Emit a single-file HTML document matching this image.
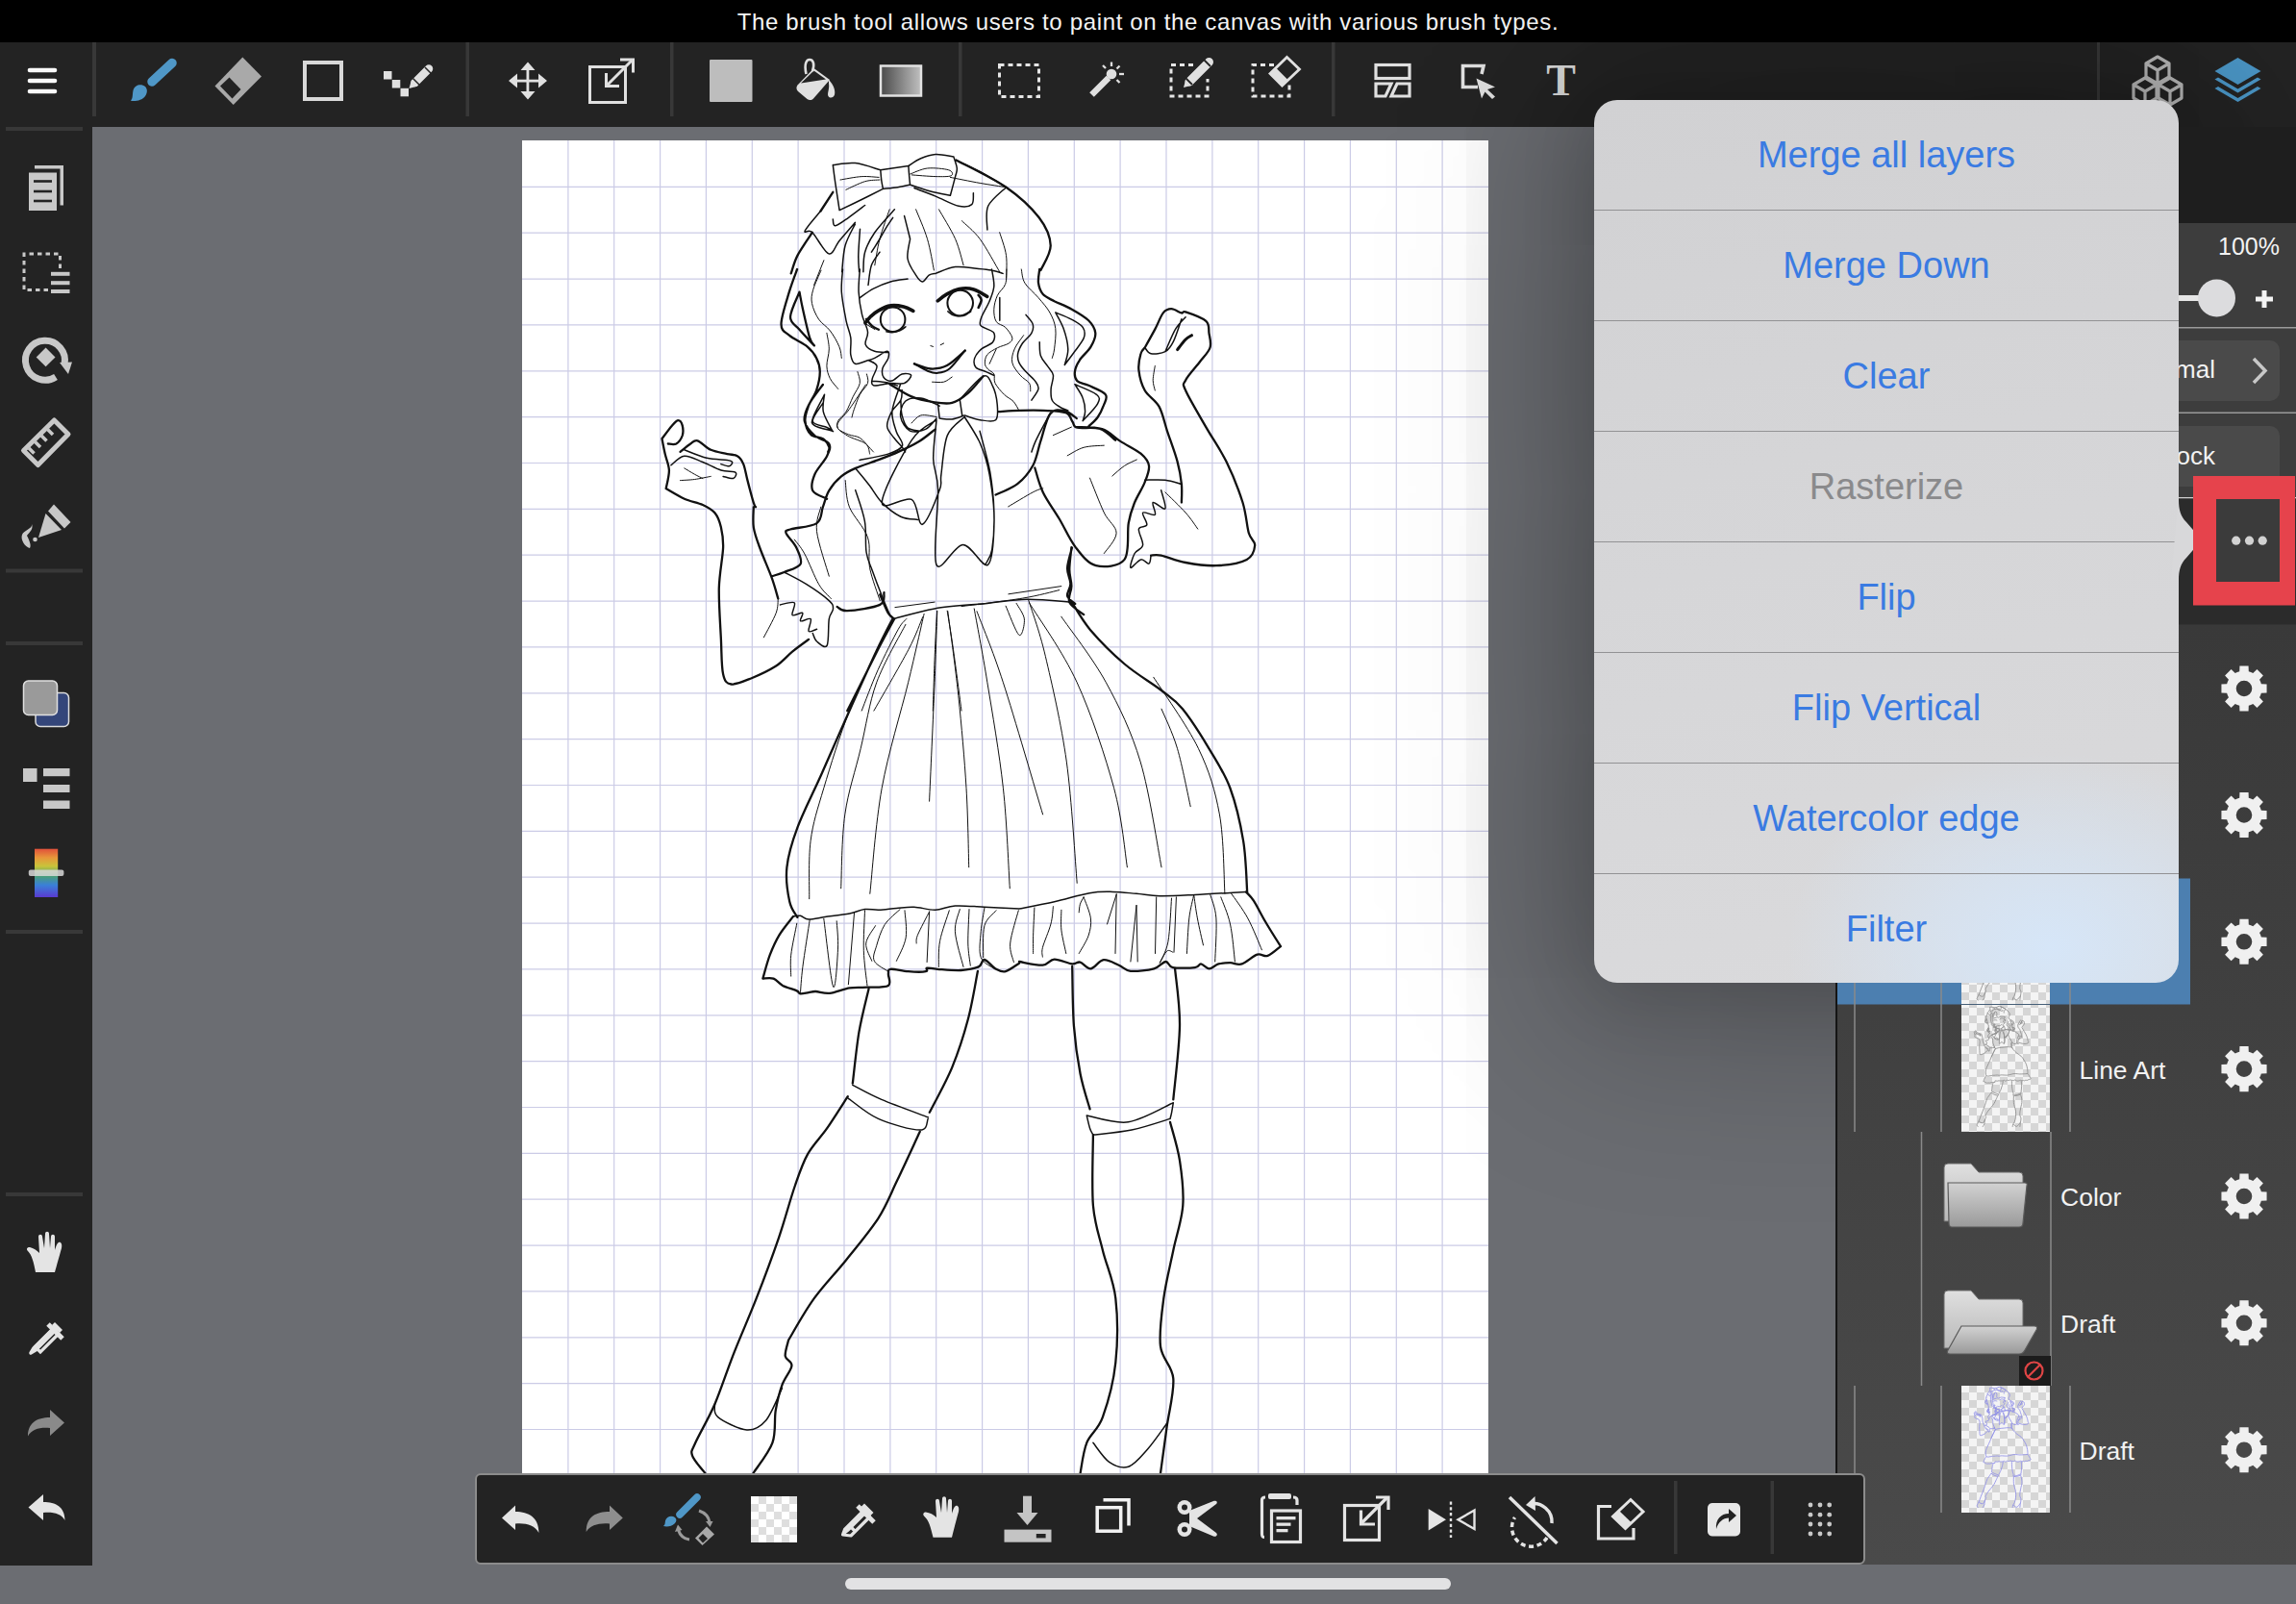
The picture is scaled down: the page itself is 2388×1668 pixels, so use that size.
<!DOCTYPE html>
<html><head><meta charset="utf-8">
<style>
*{margin:0;padding:0;box-sizing:border-box}
html,body{width:2388px;height:1668px;overflow:hidden;background:#6b6d72;font-family:"Liberation Sans",sans-serif}
.a{position:absolute}
#topbar{left:0;top:0;width:2388px;height:44px;background:#000;color:#f4f4f4;font-size:24px;letter-spacing:0.66px;line-height:46px;text-align:center;padding-left:0px}
#toolbar{left:0;top:44px;width:2388px;height:88px;background:#232323}
#sidebar{z-index:0;left:0;top:132px;width:96px;height:1496px;background:#232323}
#canvas{left:543px;top:146px;width:1005px;height:1386px;background:#fff;overflow:hidden}
#btool{left:494px;top:1532px;width:1446px;height:95px;background:#232323;border:2px solid #8c8c8c;border-radius:6px}
#home{left:879px;top:1641px;width:630px;height:12px;border-radius:6px;background:#e2e2e4}
#panel{left:1909px;top:132px;width:479px;height:1495px;background:#1e1e1e;overflow:hidden}
#popup{left:1658px;top:104px;width:608px;height:918px;border-radius:24px;background:radial-gradient(ellipse 45% 22% at 78% 96%,rgba(214,230,248,1) 0%,rgba(214,230,248,0.6) 45%,rgba(214,230,248,0) 100%),linear-gradient(170deg,#d1d1d3 0%,#d6d6d8 50%,#dadadc 100%);overflow:hidden}
#shadow{left:1658px;top:104px;width:608px;height:918px;border-radius:24px;box-shadow:0 10px 200px 30px rgba(0,0,0,0.30),0 4px 70px 10px rgba(0,0,0,0.12)}
.row{position:absolute;left:0;width:608px;height:115px;color:#3a7be2;font-size:38px;text-align:center;line-height:115px}
.rsep{position:absolute;left:0;width:608px;height:1.2px;background:#929294}
.lname{position:absolute;color:#f2f2f2;font-size:26.5px}
</style></head><body>
<div id="topbar" class="a">The brush tool allows users to paint on the canvas with various brush types.</div>
<div id="toolbar" class="a"></div>
<div id="sidebar" class="a"></div>
<svg class="a" style="left:0;top:44px" width="2388" height="1584" viewBox="0 44 2388 1584">
<defs>
<linearGradient id="grd" x1="0" y1="0" x2="1" y2="0"><stop offset="0" stop-color="#4a4a4a"/><stop offset="1" stop-color="#c0c0c0"/></linearGradient>
<linearGradient id="rb" x1="0" y1="0" x2="0" y2="1"><stop offset="0" stop-color="#e0503a"/><stop offset="0.18" stop-color="#e8963a"/><stop offset="0.36" stop-color="#c8c43a"/><stop offset="0.55" stop-color="#4aa070"/><stop offset="0.75" stop-color="#3a80d8"/><stop offset="1" stop-color="#5a3ad0"/></linearGradient>
</defs>
<!-- separators -->
<g fill="#383838">
<rect x="96" y="44" width="4" height="77"/>
<rect x="484.5" y="44" width="3.5" height="77"/>
<rect x="697" y="44" width="3.5" height="77"/>
<rect x="997" y="44" width="3.5" height="77"/>
<rect x="1385" y="44" width="3.5" height="77"/>
<rect x="2181" y="44" width="3" height="88"/>
<rect x="6" y="132" width="80" height="4"/>
<rect x="6" y="591.5" width="80" height="4"/>
<rect x="6" y="667" width="80" height="4"/>
<rect x="6" y="967" width="80" height="4"/>
<rect x="6" y="1240" width="80" height="4"/>
</g>
<!-- hamburger -->
<g stroke="#fafafa" stroke-width="4.6" stroke-linecap="round">
<line x1="31" y1="73" x2="57" y2="73"/><line x1="31" y1="84" x2="57" y2="84"/><line x1="31" y1="95" x2="57" y2="95"/>
</g>
<!-- brush blue -->
<g fill="#4f97c7">
<line x1="179" y1="65.5" x2="158" y2="85" stroke="#4f97c7" stroke-width="9.5" stroke-linecap="round"/>
<path d="M151,90 C147,86.5 140,88 138.5,94 C137.5,99 138.5,101.5 136,104.8 C141,105.5 148,104.5 151,100 C153.5,96.5 153.5,92.5 151,90Z"/>
</g>
<!-- eraser -->
<path d="M252.3,59.5 L272,79.5 L242.7,109 L223.5,89.5Z" fill="#a9a9a9"/>
<path d="M229,89.5 L238.5,80.5 L250.5,93 L241.5,102.5Z" fill="#232323"/>
<!-- square -->
<rect x="317" y="65" width="38" height="38" fill="none" stroke="#d8d8d8" stroke-width="4"/>
<!-- dot pencil -->
<g fill="#e0e0e0">
<rect x="399" y="74" width="8.5" height="8.5"/><rect x="407.8" y="83" width="8.5" height="8.5"/><rect x="416.5" y="91.8" width="8.5" height="8.5"/>
<path d="M425.5,92 L428,83 L434.5,89.5Z"/>
<line x1="431.5" y1="86" x2="446" y2="71.5" stroke="#e0e0e0" stroke-width="8.5" stroke-linecap="round"/>
</g>
<line x1="442" y1="70" x2="448.5" y2="76.5" stroke="#232323" stroke-width="1.5"/>
<line x1="429.5" y1="81.5" x2="436" y2="88" stroke="#232323" stroke-width="1.5"/>
<!-- move -->
<g fill="#e0e0e0">
<rect x="533" y="82.7" width="32" height="2.8"/><rect x="547.5" y="68" width="2.8" height="32"/>
<path d="M549,64.4 L541.5,73 L556.5,73Z M549,103.6 L541.5,95 L556.5,95Z M529,84 L538,76.5 L538,91.5Z M569,84 L560,76.5 L560,91.5Z"/>
</g>
<!-- transform -->
<g fill="none" stroke="#e0e0e0" stroke-width="3">
<rect x="613.5" y="69.5" width="37" height="37"/>
<line x1="632" y1="88" x2="657.5" y2="62.5"/>
<path d="M645,62 H658.5 V75.5"/>
<path d="M630.5,76 V89.5 H644"/>
</g>
<!-- fill square -->
<rect x="738" y="62" width="44.5" height="44" rx="1" fill="#bdbdbd"/>
<!-- bucket -->
<g fill="#e0e0e0">
<path d="M846.5,71 L863,83 L846,102.5 C844,104.5 841.5,104.5 839.5,103 L830,95 C828,93 828,90.5 829.5,88.5Z"/>
<path d="M833,86.5 L846.5,73.5 L859,82.5 Z" fill="#232323"/>
<path d="M838.5,77 C836,66 839,62 842,62 C846,62 847.5,67 845,74" fill="none" stroke="#e0e0e0" stroke-width="2.6"/>
<path d="M862,83 C867,88 869,94 868,98.5 C867,102 863,102.5 861.5,100 C860,97.5 863,92 862,87Z"/>
</g>
<!-- gradient -->
<rect x="916" y="68.5" width="42" height="31" fill="url(#grd)" stroke="#e2e2e2" stroke-width="2.5"/>
<!-- select rect -->
<rect x="1039.5" y="67.5" width="41" height="33" fill="none" stroke="#e6e6e6" stroke-width="3" stroke-dasharray="5 4"/>
<!-- wand -->
<g fill="#e0e0e0" stroke="#e0e0e0">
<line x1="1135.5" y1="98.5" x2="1153" y2="81" stroke-width="6.5"/>
<circle cx="1156" cy="77" r="5.3" stroke="none"/>
<g stroke-width="2.3"><line x1="1156" y1="64.5" x2="1156" y2="69"/><line x1="1147" y1="68" x2="1150" y2="71"/><line x1="1164.5" y1="68.5" x2="1161.5" y2="71.5"/><line x1="1164" y1="77" x2="1169" y2="77"/><line x1="1161.5" y1="83" x2="1164.5" y2="86"/></g>
</g>
<!-- select pen -->
<g>
<path d="M1241,67.5 H1218 V100 H1256 V82" fill="none" stroke="#e6e6e6" stroke-width="3" stroke-dasharray="5 4"/>
<path d="M1231,91 L1233.5,81.5 L1240.5,88.5Z" fill="#e0e0e0"/>
<line x1="1237" y1="85" x2="1257.5" y2="64.5" stroke="#e0e0e0" stroke-width="9" stroke-linecap="round"/>
<line x1="1252" y1="62" x2="1259" y2="69" stroke="#232323" stroke-width="1.8"/>
<line x1="1233" y1="81" x2="1240" y2="88" stroke="#232323" stroke-width="1.8"/>
</g>
<!-- select eraser -->
<g>
<path d="M1325,67.5 H1303 V100 H1341 V88" fill="none" stroke="#e6e6e6" stroke-width="3" stroke-dasharray="5 4"/>
<path d="M1338.5,59.5 L1351.5,72 L1333.5,89 L1321,76.5Z" fill="none" stroke="#e0e0e0" stroke-width="2.8"/>
<path d="M1327,70.5 L1339.5,83 L1333.5,89 L1321,76.5Z" fill="#e0e0e0"/>
</g>
<!-- panels -->
<g fill="none" stroke="#e0e0e0" stroke-width="3.2">
<rect x="1431" y="67.5" width="35" height="14"/>
<path d="M1431,87 H1447 L1441,100 H1431Z"/>
<path d="M1453,87 H1466 V100 H1447Z"/>
</g>
<!-- select arrow -->
<g>
<path d="M1537,90.5 H1521.5 V68.5 H1543 L1541,77" fill="none" stroke="#e0e0e0" stroke-width="3.6"/>
<path d="M1535.5,81.5 L1555,90.5 L1547,93 L1555,100.5 L1552,103 L1544.5,95.5 L1541,102.5Z" fill="#e0e0e0"/>
</g>
<!-- T -->
<text x="1623.5" y="98.5" fill="#d8d8d8" font-size="46" font-weight="bold" text-anchor="middle" font-family="Liberation Serif">T</text>
<!-- cubes -->
<g fill="none" stroke="#b8b8b8" stroke-width="3.2" stroke-linejoin="round">
<path d="M2244,59 L2256,66 L2256,80 L2244,87 L2232,80 L2232,66Z M2232,66 L2244,73 L2256,66 M2244,73 V87"/>
<path d="M2231,81 L2243,88 L2243,102 L2231,109 L2219,102 L2219,88Z M2219,88 L2231,95 L2243,88 M2231,95 V109"/>
<path d="M2257,81 L2269,88 L2269,102 L2257,109 L2245,102 L2245,88Z M2245,88 L2257,95 L2269,88 M2257,95 V109"/>
</g>
<!-- layers blue -->
<g fill="#4a95c5">
<path d="M2327.5,60 L2351.5,74 L2327.5,88 L2303.5,74Z"/>
<path d="M2303.5,82.5 L2307,80.5 L2327.5,92.5 L2348,80.5 L2351.5,82.5 L2327.5,96.5Z"/>
<path d="M2303.5,92 L2307,90 L2327.5,102 L2348,90 L2351.5,92 L2327.5,106Z"/>
</g>
<!-- SIDEBAR -->
<g fill="#c8c8c8">
<path d="M36,172 H66 V213.5 H62.5 V175.5 H36Z"/>
<rect x="30" y="179.5" width="29" height="39.5"/>
</g>
<g stroke="#232323" stroke-width="2.6"><line x1="35" y1="188.5" x2="54" y2="188.5"/><line x1="35" y1="199" x2="54" y2="199"/><line x1="35" y1="209" x2="54" y2="209"/></g>
<path d="M50,301.5 H25 V264 H62.5 V279" fill="none" stroke="#c8c8c8" stroke-width="3" stroke-dasharray="4.5 4"/>
<g fill="#c8c8c8"><rect x="53" y="282.8" width="19.5" height="4"/><rect x="53" y="292.2" width="19.5" height="4"/><rect x="53" y="301" width="19.5" height="4"/></g>
<path d="M58,392 A20.5,20.5 0 1 1 67,379" fill="none" stroke="#c8c8c8" stroke-width="7"/>
<path d="M62,377 L75,376.5 L71,389 Z" fill="#c8c8c8"/>
<path d="M47.6,361.5 L57.5,371.4 L47.6,381.3 L37.7,371.4Z" fill="#c8c8c8"/>
<g>
<path d="M56.4,437 L71,451.5 L39.5,483.5 L24.5,468.5Z" fill="none" stroke="#c8c8c8" stroke-width="5" stroke-linejoin="round"/>
<g stroke="#c8c8c8" stroke-width="3.5"><line x1="30" y1="466" x2="35.5" y2="471.5"/><line x1="36.5" y1="459.5" x2="42" y2="465"/><line x1="43" y1="453" x2="48.5" y2="458.5"/><line x1="49.5" y1="446.5" x2="55" y2="452"/></g>
</g>
<g fill="#c8c8c8">
<path d="M56,524.5 L73.5,543 L67,549.5 L50,531.5Z"/>
<path d="M47.5,534 L64,551 L40,559 Z"/>
<circle cx="36.5" cy="561" r="2.3"/>
<path d="M33,545 C34,550 25,551 23,556 C21,561 26,569 31,570 C33,567 30,561 28,557 C31,553 35,550 33,545Z"/>
</g>
<rect x="37" y="720.5" width="34.5" height="35" rx="5" fill="#34467a" stroke="#dcdcdc" stroke-width="1.5"/>
<rect x="24.5" y="708" width="35" height="35.5" rx="5" fill="#9a9a9a" stroke="#e0e0e0" stroke-width="1.5"/>
<g fill="#c8c8c8"><rect x="24" y="799" width="14.5" height="14"/><rect x="45" y="799" width="27.5" height="8.2"/><rect x="45" y="816" width="27.5" height="8"/><rect x="45" y="832.5" width="27.5" height="8.5"/></g>
<rect x="36" y="882.7" width="24.2" height="50.3" fill="url(#rb)"/>
<rect x="29.8" y="904.6" width="36.6" height="6.5" rx="2" fill="#d8d8d8" opacity="0.85"/>
<!-- hand -->
<g id="hand" fill="#e4e4e4">
<path d="M37,1323 L57,1323 C59,1316 62,1305 64,1298 C65,1293 63,1291 61,1292 C59,1293 58,1297 57,1300 L57,1286 C57,1283 53,1283 53,1286 L52,1298 L51,1283 C51,1280 47,1280 47,1283 L46,1298 L44,1286 C44,1283 40,1283 40,1286 L41,1303 C38,1300 35,1298 31,1297 C28,1297 27,1299 29,1301 C33,1305 35,1312 37,1323Z"/>
</g>
<!-- picker -->
<g>
<path d="M59,1382 L37,1404 L32,1407 L35,1402 L57,1380" fill="none" stroke="#e4e4e4" stroke-width="3.5" stroke-linejoin="round"/>
<path d="M36.5,1400.5 L55,1382 L60.5,1387.5 L42,1406Z" fill="none" stroke="#e4e4e4" stroke-width="3.2"/>
<line x1="50" y1="1377" x2="65" y2="1392" stroke="#e4e4e4" stroke-width="5"/>
<path d="M57,1375 L65,1383 L62,1386 L54,1378Z" fill="#e4e4e4"/>
</g>
<!-- redo -->
<path d="M29,1493.5 C29,1480 38,1474 52,1474 L52,1466 L67,1479.5 L52,1493 L52,1485 C42,1484 33,1486 29,1493.5Z" fill="#8a8a8a"/>
<!-- undo -->
<path d="M67.5,1581 C67.5,1567 58,1562 45,1562 L45,1554 L29.5,1567.5 L45,1581 L45,1573 C55,1572 64,1574 67.5,1581Z" fill="#e4e4e4"/>
</svg>

<div id="canvas" class="a"><svg class="a" style="left:0;top:0" width="1005" height="1386" viewBox="0 0 1005 1386"><g stroke="#cbcbe6" stroke-width="1.2"><line x1="47.9" y1="0" x2="47.9" y2="1386"/><line x1="95.7" y1="0" x2="95.7" y2="1386"/><line x1="143.6" y1="0" x2="143.6" y2="1386"/><line x1="191.4" y1="0" x2="191.4" y2="1386"/><line x1="239.3" y1="0" x2="239.3" y2="1386"/><line x1="287.1" y1="0" x2="287.1" y2="1386"/><line x1="335.0" y1="0" x2="335.0" y2="1386"/><line x1="382.9" y1="0" x2="382.9" y2="1386"/><line x1="430.7" y1="0" x2="430.7" y2="1386"/><line x1="478.6" y1="0" x2="478.6" y2="1386"/><line x1="526.4" y1="0" x2="526.4" y2="1386"/><line x1="574.3" y1="0" x2="574.3" y2="1386"/><line x1="622.1" y1="0" x2="622.1" y2="1386"/><line x1="670.0" y1="0" x2="670.0" y2="1386"/><line x1="717.9" y1="0" x2="717.9" y2="1386"/><line x1="765.7" y1="0" x2="765.7" y2="1386"/><line x1="813.6" y1="0" x2="813.6" y2="1386"/><line x1="861.4" y1="0" x2="861.4" y2="1386"/><line x1="909.3" y1="0" x2="909.3" y2="1386"/><line x1="957.1" y1="0" x2="957.1" y2="1386"/><line x1="0" y1="48.4" x2="1005" y2="48.4"/><line x1="0" y1="96.2" x2="1005" y2="96.2"/><line x1="0" y1="144.1" x2="1005" y2="144.1"/><line x1="0" y1="191.9" x2="1005" y2="191.9"/><line x1="0" y1="239.8" x2="1005" y2="239.8"/><line x1="0" y1="287.6" x2="1005" y2="287.6"/><line x1="0" y1="335.5" x2="1005" y2="335.5"/><line x1="0" y1="383.4" x2="1005" y2="383.4"/><line x1="0" y1="431.2" x2="1005" y2="431.2"/><line x1="0" y1="479.1" x2="1005" y2="479.1"/><line x1="0" y1="526.9" x2="1005" y2="526.9"/><line x1="0" y1="574.8" x2="1005" y2="574.8"/><line x1="0" y1="622.6" x2="1005" y2="622.6"/><line x1="0" y1="670.5" x2="1005" y2="670.5"/><line x1="0" y1="718.4" x2="1005" y2="718.4"/><line x1="0" y1="766.2" x2="1005" y2="766.2"/><line x1="0" y1="814.1" x2="1005" y2="814.1"/><line x1="0" y1="861.9" x2="1005" y2="861.9"/><line x1="0" y1="909.8" x2="1005" y2="909.8"/><line x1="0" y1="957.6" x2="1005" y2="957.6"/><line x1="0" y1="1005.5" x2="1005" y2="1005.5"/><line x1="0" y1="1053.4" x2="1005" y2="1053.4"/><line x1="0" y1="1101.2" x2="1005" y2="1101.2"/><line x1="0" y1="1149.1" x2="1005" y2="1149.1"/><line x1="0" y1="1196.9" x2="1005" y2="1196.9"/><line x1="0" y1="1244.8" x2="1005" y2="1244.8"/><line x1="0" y1="1292.6" x2="1005" y2="1292.6"/><line x1="0" y1="1340.5" x2="1005" y2="1340.5"/></g></svg><svg class="a" style="left:0;top:0" width="1005" height="1386" viewBox="543 146 1005 1386"><g fill="none" stroke="#111" stroke-linecap="round" stroke-linejoin="round"><path stroke-width="1.5" d="M866.3,171.6C870.1,171.3 881.1,168.7 889.3,169.6C897.6,170.4 911.4,175.6 915.8,176.8M866.3,171.6C866.7,174.8 867.7,182.6 868.8,190.4C870.0,198.3 872.4,213.9 873.1,218.6M873.1,218.6C877.0,216.8 888.6,211.2 896.2,207.5C903.7,203.8 914.7,198.3 918.4,196.4M915.8,176.8L944.9,172.5M944.9,172.5C945.0,174.3 945.4,180.3 945.7,183.6C946.0,186.9 946.4,190.7 946.6,192.1M918.4,196.4C921.0,196.1 929.1,195.4 933.8,194.7C938.5,194.0 944.4,192.6 946.6,192.1M915.8,176.8C916.0,178.5 916.3,183.7 916.7,187.0C917.1,190.3 918.1,194.8 918.4,196.4M944.9,172.5C947.0,171.2 953.0,166.8 957.7,164.8C962.4,162.8 967.4,160.8 973.1,160.5C978.8,160.2 988.7,162.7 991.9,163.1M991.9,163.1C992.4,165.1 995.0,171.6 995.3,175.0C995.6,178.5 994.7,178.9 993.6,183.6C992.4,188.3 989.3,200.0 988.4,203.2M946.6,192.1C950.1,193.3 961.0,197.1 967.9,199.0C974.9,200.8 985.0,202.5 988.4,203.2M994.4,166.5C998.6,168.5 1010.5,173.8 1019.2,178.5C1027.9,183.2 1042.0,192.0 1046.5,194.7M1046.5,194.7C1043.4,198.0 1031.0,206.9 1027.7,214.3C1024.5,221.7 1027.0,235.0 1026.9,239.1M1012.4,200.7C1012.1,202.7 1013.2,210.4 1010.7,212.6C1008.1,214.9 1003.2,215.8 997.0,214.3C990.7,212.9 980.8,207.2 973.1,204.1C965.4,201.0 954.6,197.0 950.9,195.5M899.6,213.5C896.8,215.6 887.6,222.7 882.5,226.3C877.4,229.9 871.5,234.6 868.8,234.8C866.1,235.1 866.7,229.1 866.3,228.0M853.5,219.5C850.8,222.9 838.7,236.3 837.2,240.0C835.8,243.7 840.8,237.7 844.9,241.7C849.1,245.7 857.3,262.5 862.0,263.9C866.7,265.3 868.6,255.6 873.1,250.2C877.7,244.8 886.6,234.6 889.3,231.4M889.3,233.1C887.6,236.8 881.4,247.1 879.1,255.3C876.8,263.6 876.2,278.1 875.7,282.7M894.5,238.3C894.2,242.8 892.9,258.2 892.8,265.6C892.6,273.0 893.5,279.8 893.6,282.7M897.9,282.7C898.2,279.3 897.6,269.0 899.6,262.2C901.6,255.3 904.7,249.1 909.8,241.7C915.0,234.3 926.9,221.7 930.4,217.8M906.4,262.2C907.9,259.9 912.4,252.8 915.0,248.5C917.5,244.2 919.5,240.3 921.8,236.6C924.1,232.9 927.5,228.0 928.6,226.3M903.0,296.4C903.6,292.9 904.4,281.5 906.4,275.8C908.4,270.2 913.6,264.5 915.0,262.2M946.6,248.5C946.2,251.9 943.0,262.8 944.0,269.0C945.0,275.3 950.0,282.1 952.6,286.1C955.1,290.1 957.1,292.9 959.4,292.9C961.7,292.9 964.0,287.5 966.2,286.1C968.5,284.7 971.9,284.7 973.1,284.4M940.6,224.6C941.3,227.4 943.9,237.7 944.9,241.7C945.9,245.7 946.3,247.4 946.6,248.5M973.1,284.4C976.5,283.3 986.4,278.4 993.6,277.6C1000.7,276.7 1009.5,278.7 1015.8,279.3C1022.0,279.8 1026.6,280.1 1031.2,281.0C1035.7,281.8 1041.1,283.8 1043.1,284.4M711.8,467.8C715.7,469.2 727.7,474.5 735.1,476.3C742.5,478.1 751.9,477.7 756.3,478.4C760.7,479.1 761.2,479.5 761.6,480.5C761.9,481.6 760.4,484.4 758.4,484.8C756.5,485.1 751.3,483.0 749.9,482.6M698.0,483.7C700.3,482.1 706.3,474.7 711.8,474.2C717.3,473.6 724.5,478.1 730.9,480.5C737.2,483.0 744.3,487.2 749.9,489.0C755.6,490.8 762.6,489.7 764.8,491.1C766.9,492.5 764.8,496.8 762.6,497.5C760.5,498.2 753.8,495.7 752.1,495.4M815.6,595.0C819.5,597.1 831.2,602.7 838.9,607.7C846.7,612.6 857.7,620.4 862.3,624.6C866.8,628.9 866.5,629.9 866.5,633.1C866.5,636.3 863.3,637.4 862.3,643.7C861.2,650.1 862.3,667.4 860.1,671.3C858.0,675.1 852.0,669.1 849.5,667.0C847.1,664.9 846.0,660.0 845.3,658.5M811.4,628.9C813.9,628.5 824.1,625.0 826.2,626.8C828.3,628.5 822.7,637.7 824.1,639.5C825.5,641.2 833.3,636.3 834.7,637.4C836.1,638.4 831.2,644.8 832.6,645.8C834.0,646.9 841.8,641.9 843.2,643.7C844.6,645.5 840.0,654.7 841.1,656.4C842.1,658.2 848.1,654.7 849.5,654.3M855.9,419.1C854.1,422.3 844.6,433.9 845.3,438.1C846.0,442.4 856.6,442.7 860.1,444.5C863.7,446.3 865.4,448.0 866.5,448.7M936.4,400.0C935.0,404.6 928.7,419.4 927.9,427.5C927.2,435.7 930.4,442.7 932.2,448.7C934.0,454.7 940.0,459.7 938.5,463.6C937.1,467.5 931.1,469.6 923.7,472.1C916.3,474.5 899.0,477.4 894.0,478.4M1190.7,361.5C1191.8,362.5 1193.6,367.1 1197.1,367.8C1200.6,368.5 1208.0,367.8 1211.9,365.7C1215.8,363.6 1217.6,360.8 1220.4,355.1C1223.2,349.4 1227.5,335.7 1228.9,331.8M1211.9,365.7C1213.7,361.8 1219.0,348.4 1222.5,342.4C1226.0,336.4 1231.3,331.8 1233.1,329.7M1190.7,499.2C1194.3,499.2 1205.6,498.5 1211.9,499.2C1218.3,499.9 1226.0,502.7 1228.9,503.4M1207.7,509.8C1208.4,513.0 1213.3,526.8 1211.9,528.9C1210.5,531.0 1201.0,521.5 1199.2,522.5C1197.4,523.6 1203.1,533.5 1201.3,535.2C1199.6,537.0 1190.0,531.3 1188.6,533.1C1187.2,534.9 1193.6,543.0 1192.8,545.8C1192.1,548.7 1185.1,546.5 1184.4,550.1C1183.7,553.6 1189.3,562.8 1188.6,567.0C1187.9,571.3 1182.3,571.6 1180.1,575.5C1178.0,579.4 1174.8,589.3 1175.9,590.3C1177.0,591.4 1183.3,582.6 1186.5,581.9C1189.7,581.1 1193.2,586.8 1195.0,586.1C1196.7,585.4 1196.7,579.0 1197.1,577.6M1019.1,448.3C1020.8,455.4 1027.2,476.6 1029.7,490.7C1032.1,504.9 1033.6,519.7 1033.9,533.1C1034.3,546.5 1033.2,562.4 1031.8,571.3C1030.4,580.1 1026.5,583.6 1025.4,586.1M928.2,643.9C935.5,642.1 955.6,635.7 972.1,632.9C988.5,630.2 1010.9,629.0 1026.9,627.4C1042.9,625.8 1053.5,623.6 1068.1,623.3C1082.7,623.1 1107.0,625.6 1114.7,626.1M886.8,1128.4C891.8,1130.9 903.7,1137.9 916.8,1143.4C929.9,1149.0 957.1,1158.7 965.2,1161.8M881.8,1141.8C887.1,1145.4 901.0,1157.9 913.5,1163.4C926.0,1169.0 948.2,1175.1 956.8,1175.1C965.4,1175.1 963.8,1165.4 965.2,1163.4M743.4,1460.3C743.9,1462.5 741.1,1469.2 746.7,1473.6C752.3,1478.1 768.4,1486.4 776.7,1487.0C785.1,1487.5 790.6,1484.2 796.7,1477.0C802.8,1469.7 810.6,1449.2 813.4,1443.6M1130.3,1160.1C1137.5,1161.2 1158.6,1169.0 1173.6,1166.8C1188.6,1164.5 1212.5,1150.1 1220.3,1146.8M1136.9,1180.1C1143.6,1179.3 1163.6,1177.9 1177.0,1175.1C1190.3,1172.3 1210.3,1165.4 1217.0,1163.4M1130.3,1160.1C1130.8,1162.3 1132.5,1170.1 1133.6,1173.4C1134.7,1176.8 1136.4,1179.0 1136.9,1180.1M1220.3,1146.8C1220.0,1148.4 1219.2,1154.0 1218.6,1156.8C1218.1,1159.5 1217.3,1162.3 1217.0,1163.4M1136.9,1500.3C1139.7,1503.6 1147.5,1516.1 1153.6,1520.3C1159.7,1524.5 1166.9,1527.5 1173.6,1525.3C1180.3,1523.1 1187.0,1514.5 1193.6,1507.0C1200.3,1499.5 1210.3,1484.7 1213.6,1480.3M907.5,396.2C910.0,396.5 917.8,397.0 922.1,397.8C926.5,398.6 931.6,400.5 933.5,401.1M977.2,422.1C974.0,420.8 963.7,414.8 957.8,414.0C951.8,413.2 945.1,414.0 941.6,417.3C938.1,420.5 935.9,428.3 936.7,433.5C937.5,438.6 942.1,445.9 946.4,448.1C950.8,450.2 958.1,448.6 962.6,446.4C967.2,444.3 972.1,437.0 974.0,435.1M975.6,420.5L977.2,435.1M998.3,415.7L1000.7,431.9M977.2,435.1C979.4,435.2 985.9,436.4 990.2,435.9C994.5,435.4 1001.0,432.5 1003.2,431.9M998.3,415.7C1002.3,411.6 1016.9,393.8 1022.6,391.3C1028.3,388.9 1029.9,396.2 1032.3,401.1C1034.8,405.9 1036.7,414.6 1037.2,420.5C1037.7,426.5 1038.5,434.0 1035.6,436.7C1032.6,439.4 1024.8,437.5 1019.4,436.7C1014.0,435.9 1005.9,432.7 1003.2,431.9M974.0,436.7C973.5,443.5 970.5,465.1 970.7,477.2C971.0,489.4 975.1,491.3 975.6,509.6C976.2,528.0 969.7,578.0 974.0,587.4C978.3,596.9 992.6,566.4 1001.5,566.4C1010.5,566.4 1022.1,591.5 1027.5,587.4C1032.9,583.4 1033.7,557.7 1034.0,542.1C1034.2,526.4 1031.5,506.9 1029.1,493.4C1026.7,479.9 1023.7,471.0 1019.4,461.0C1015.0,451.0 1005.9,438.1 1003.2,433.5M1003.2,433.5C1000.2,436.7 989.4,442.9 985.3,452.9C981.3,462.9 980.2,484.0 978.9,493.4C977.5,502.9 980.5,501.0 977.2,509.6C974.0,518.3 964.3,543.7 959.4,545.3C954.5,546.9 955.1,523.1 948.1,519.4C941.0,515.6 917.3,532.9 917.3,522.6C917.3,512.3 938.6,472.1 948.1,457.8C957.5,443.5 969.7,440.2 974.0,436.7M889.7,487.0C892.2,489.9 899.7,498.8 904.3,504.8C908.9,510.7 911.9,517.2 917.3,522.6C922.7,528.0 930.5,534.2 936.7,537.2C942.9,540.2 951.6,539.9 954.5,540.4M889.7,509.6C891.3,515.0 897.6,531.2 899.4,542.1C901.3,552.9 899.7,565.8 901.1,574.5C902.4,583.1 904.8,586.3 907.5,593.9C910.2,601.5 914.3,612.3 917.3,619.8C920.2,627.4 924.0,636.0 925.4,639.3M857.5,410.3C855.6,414.3 847.5,428.7 845.7,434.0C843.9,439.3 843.5,439.9 846.9,442.3C850.2,444.7 862.7,447.2 865.8,448.2M857.5,410.3C857.3,413.3 855.0,421.8 856.3,428.1C857.7,434.4 864.2,444.9 865.8,448.2M876.5,280.0C876.3,283.9 874.7,294.8 875.3,303.7C875.9,312.6 878.5,325.4 880.0,333.3C881.6,341.2 884.0,345.2 884.8,351.1C885.6,357.0 884.0,364.3 884.8,368.9C885.6,373.4 886.6,377.3 889.5,378.3C892.5,379.3 899.2,375.8 902.5,374.8C905.9,373.8 906.3,374.0 909.7,372.4C913.0,370.8 920.3,365.3 922.7,365.3C925.1,365.3 924.7,369.4 923.9,372.4C923.1,375.4 918.7,379.7 917.9,383.1C917.2,386.4 917.5,390.4 919.1,392.5C920.7,394.7 924.3,396.7 927.4,396.1C930.6,395.5 934.7,390.0 938.1,389.0C941.4,388.0 947.2,388.6 947.6,390.2C948.0,391.8 944.0,397.1 940.5,398.5C936.9,399.8 931.6,398.1 926.2,398.5C920.9,398.9 911.6,401.6 908.5,400.8C905.3,400.0 906.7,397.1 907.3,393.7C907.9,390.4 912.6,383.9 912.0,380.7C911.4,377.5 905.1,375.8 903.7,374.8M894.3,280.0C894.1,283.9 892.7,295.8 893.1,303.7C893.5,311.6 895.0,320.5 896.6,327.4C898.2,334.3 902.0,340.0 902.5,345.2C903.1,350.3 899.0,354.8 900.2,358.2C901.4,361.5 905.7,363.9 909.7,365.3C913.6,366.7 921.5,366.3 923.9,366.5M894.3,309.6C896.6,308.0 903.1,302.9 908.5,300.1C913.8,297.4 920.3,294.7 926.2,293.0C932.2,291.4 941.0,290.6 944.0,290.1M938.1,405.6C937.9,407.4 938.7,412.5 936.9,416.2C935.1,420.0 929.8,423.5 927.4,428.1C925.1,432.6 922.3,438.9 922.7,443.5C923.1,448.0 927.2,451.8 929.8,455.3C932.4,458.9 936.1,462.4 938.1,464.8C940.1,467.3 941.0,469.2 941.6,470.0M936.9,416.2C937.1,418.8 936.9,426.9 938.1,431.6C939.3,436.4 941.0,441.9 944.0,444.7C947.0,447.4 953.9,447.6 955.9,448.2M1031.5,280.0C1031.9,283.0 1034.2,292.2 1033.8,297.8C1033.4,303.3 1031.3,307.8 1029.1,313.2C1026.9,318.5 1022.4,325.6 1020.8,329.8C1019.2,333.9 1018.8,336.1 1019.6,338.0C1020.4,340.0 1023.2,340.2 1025.5,341.6C1027.9,343.0 1032.6,344.0 1033.8,346.3C1035.0,348.7 1034.8,353.1 1032.6,355.8C1030.5,358.6 1024.0,360.2 1020.8,362.9C1017.6,365.7 1014.7,369.2 1013.7,372.4C1012.7,375.6 1012.9,379.5 1014.9,381.9C1016.9,384.3 1022.4,385.2 1025.5,386.6C1028.7,388.0 1032.5,389.6 1033.8,390.2M1039.8,309.6L1039.8,333.3M1097.8,325.0C1100.6,326.2 1109.7,329.6 1114.4,332.1C1119.1,334.7 1124.1,337.3 1126.2,340.4C1128.4,343.6 1128.8,346.9 1127.4,351.1C1126.0,355.2 1121.3,360.6 1117.9,365.3C1114.6,370.0 1109.1,377.1 1107.3,379.5M1097.8,325.0C1099.2,327.8 1103.9,335.3 1106.1,341.6C1108.3,347.9 1110.6,356.6 1110.8,362.9C1111.0,369.2 1107.9,376.7 1107.3,379.5M1117.9,399.7C1121.7,401.4 1136.5,407.0 1140.5,410.3C1144.4,413.7 1144.0,415.2 1141.6,419.8C1139.3,424.3 1128.8,434.6 1126.2,437.6M1117.9,399.7C1119.3,402.0 1124.5,409.1 1126.2,413.9C1128.0,418.6 1128.6,424.1 1128.6,428.1C1128.6,432.0 1126.6,436.0 1126.2,437.6M1067.0,327.4C1068.2,329.0 1073.1,333.7 1074.1,336.9C1075.1,340.0 1074.7,343.0 1072.9,346.3C1071.1,349.7 1065.8,353.4 1063.4,357.0C1061.1,360.6 1059.3,364.3 1058.7,367.7C1058.1,371.0 1058.5,374.0 1059.9,377.1C1061.3,380.3 1064.2,383.5 1067.0,386.6C1069.8,389.8 1074.3,393.1 1076.5,396.1C1078.7,399.1 1080.6,401.0 1080.0,404.4C1079.4,407.7 1074.1,414.3 1072.9,416.2M1081.2,355.8C1081.4,358.2 1081.0,365.9 1082.4,370.0C1083.8,374.2 1087.3,377.3 1089.5,380.7C1091.7,384.1 1094.8,386.2 1095.4,390.2C1096.0,394.1 1093.3,400.0 1093.1,404.4C1092.9,408.7 1092.7,413.1 1094.3,416.2C1095.8,419.4 1099.8,421.6 1102.5,423.3C1105.3,425.1 1109.5,426.3 1110.8,426.9M825.1,952.9C826.3,952.8 829.8,951.8 832.4,952.3C835.1,952.8 836.7,955.8 841.0,956.0C845.2,956.2 850.9,954.6 858.0,953.5C865.2,952.5 876.7,951.2 883.7,949.9C890.6,948.6 894.4,946.2 899.5,945.6C904.6,945.0 908.7,946.4 914.1,946.2C919.6,946.0 926.3,944.9 932.4,944.4C938.5,943.9 944.0,942.9 950.7,943.2C957.4,943.5 965.6,946.4 972.7,946.2C979.8,946.0 984.9,942.5 993.4,942.0C1002.0,941.4 1012.8,942.7 1023.9,943.2C1035.0,943.7 1054.0,944.7 1060.0,945.0M1060.0,945.1C1066.1,943.9 1084.4,940.5 1096.6,937.8C1108.8,935.1 1123.0,930.4 1133.2,928.7C1143.3,926.9 1149.4,927.3 1157.6,927.4C1165.7,927.5 1173.8,928.6 1182.0,929.3C1190.1,930.0 1196.2,931.5 1206.3,931.7C1216.5,931.9 1228.0,931.2 1242.9,930.5C1257.9,929.8 1287.1,927.9 1296.0,927.4M1091.9,430.5C1090.5,433.0 1086.2,440.9 1083.6,445.9C1081.0,450.8 1078.3,456.0 1076.5,460.1C1074.7,464.1 1073.5,468.4 1072.9,470.0"/><path stroke-width="1.0" d="M874.0,187.0C877.7,186.4 889.5,184.0 896.2,183.6C902.9,183.2 911.1,184.3 914.1,184.4M879.9,197.3C883.2,195.8 893.8,190.4 899.6,188.7C905.4,187.0 912.4,187.3 915.0,187.0M946.6,181.0C949.6,180.0 957.8,175.8 964.5,175.0C971.2,174.3 982.6,175.5 986.7,176.8C990.9,178.0 991.6,181.6 989.3,182.7C987.0,183.9 979.9,183.7 973.1,183.6C966.2,183.4 952.4,182.2 948.3,181.9M988.4,184.4C993.6,185.4 1009.5,188.7 1019.2,190.4C1028.9,192.1 1042.0,194.0 1046.5,194.7M856.9,270.7L846.6,296.4M952.6,217.8C954.6,222.9 961.4,238.0 964.5,248.5C967.7,259.0 970.2,275.6 971.4,281.0M976.5,217.8C979.3,222.9 989.3,238.8 993.6,248.5C997.8,258.2 1000.7,271.3 1002.1,275.8M1000.4,229.7C1003.5,232.9 1012.6,239.7 1019.2,248.5C1025.7,257.3 1036.3,277.0 1039.7,282.7M1039.7,241.7C1040.8,245.7 1045.4,257.3 1046.5,265.6C1047.7,273.9 1046.5,287.0 1046.5,291.2M925.2,217.8C923.5,222.9 917.5,238.8 915.0,248.5C912.4,258.2 910.7,271.3 909.8,275.8M901.3,337.4L909.8,342.5M967.9,359.6L970.5,360.4M978.2,358.7L981.6,357.0M969.6,397.2C971.6,397.2 978.2,398.0 981.6,397.2C985.0,396.3 988.7,392.9 990.2,392.0M711.8,486.9C713.6,487.9 719.2,491.5 722.4,493.2C725.6,495.0 729.4,496.8 730.9,497.5M707.5,499.6C710.0,499.4 717.1,499.2 722.4,498.5C727.7,497.8 736.5,495.9 739.3,495.4M809.3,622.5C808.9,625.0 809.6,630.6 807.2,637.4C804.7,644.1 796.6,658.5 794.4,662.8M826.2,561.1C828.0,563.5 832.6,568.1 836.8,575.9C841.1,583.7 847.1,599.9 851.7,607.7C856.2,615.5 862.3,620.0 864.4,622.5M879.2,499.6C879.9,504.2 879.6,517.3 883.4,527.2C887.3,537.0 899.0,548.3 902.5,558.9C906.0,569.5 902.5,579.8 904.6,590.7C906.8,601.7 913.5,619.0 915.2,624.6M853.8,527.2C853.1,531.4 848.1,540.6 849.5,552.6C850.9,564.6 860.1,591.4 862.3,599.2M896.2,739.1C899.0,732.0 906.8,710.8 913.1,696.7C919.5,682.6 929.4,663.1 934.3,654.3C939.2,645.5 941.4,645.5 942.8,643.7M908.9,739.1C914.9,728.5 936.4,691.7 944.9,675.5C953.4,659.2 957.3,647.2 959.7,641.6M970.3,739.1C970.7,728.5 971.7,692.8 972.5,675.5C973.2,658.2 974.2,641.9 974.6,635.2M985.2,635.2C986.2,641.9 989.1,658.2 991.5,675.5C994.0,692.8 998.6,728.5 1000.0,739.1M900.4,400.0C897.6,404.2 888.4,418.4 883.4,425.4C878.5,432.5 871.1,437.8 870.7,442.4C870.4,447.0 876.4,449.8 881.3,453.0C886.3,456.2 896.5,458.3 900.4,461.5C904.3,464.6 903.9,470.3 904.6,472.1M1201.3,380.5C1201.0,383.0 1199.2,391.1 1199.2,395.4C1199.2,399.6 1201.0,404.2 1201.3,406.0M1211.9,511.9C1215.5,515.5 1227.5,526.8 1233.1,533.1C1238.8,539.5 1243.7,547.2 1245.8,550.1M1110.2,473.8C1113.0,472.4 1120.8,467.1 1127.2,465.3C1133.5,463.5 1144.8,463.5 1148.3,463.2M1095.4,452.6L1114.4,444.1M1156.8,495.0C1158.9,493.2 1165.3,487.2 1169.5,484.4C1173.8,481.5 1180.1,479.1 1182.3,478.0M1133.5,497.1C1136.0,503.1 1143.8,523.6 1148.3,533.1C1152.9,542.6 1161.1,547.2 1161.1,554.3C1161.1,561.4 1150.5,572.0 1148.3,575.5M1048.7,526.8C1053.0,524.3 1068.2,515.1 1074.2,511.9C1080.2,508.7 1083.0,508.4 1084.8,507.7M1000.0,630.6C1010.6,629.2 1046.6,624.9 1063.6,622.1C1080.5,619.3 1095.4,615.1 1101.7,613.6M930.9,631.6L972.1,626.1M1048.9,617.8L1103.8,609.6M922.7,654.9C916.3,668.6 895.2,709.8 884.3,737.2C873.3,764.6 863.7,796.6 856.8,819.5C850.0,842.4 845.6,855.2 843.1,874.4C840.6,893.6 842.0,924.7 841.7,934.7M941.9,649.4C936.9,659.4 919.5,688.3 911.7,709.8C903.9,731.2 900.7,755.5 895.2,778.3C889.8,801.2 882.2,822.7 878.8,846.9C875.3,871.2 875.3,911.0 874.7,923.8M961.1,638.4C958.3,650.3 951.9,679.6 944.6,709.8C937.3,739.9 923.8,782.9 917.2,819.5C910.6,856.1 906.9,911.0 904.8,929.3M974.8,635.7C974.3,648.0 973.4,676.8 972.1,709.8C970.7,742.7 967.5,812.6 966.6,833.2M985.8,635.7C987.6,650.3 993.6,692.8 996.8,723.5C1000.0,754.1 1003.2,789.8 1005.0,819.5C1006.8,849.2 1007.3,888.1 1007.7,901.8M1013.2,632.9C1015.5,645.7 1021.9,678.7 1026.9,709.8C1032.0,740.8 1039.5,783.8 1043.4,819.5C1047.3,855.2 1049.1,906.4 1050.3,923.8M1016.0,635.7C1020.5,648.0 1032.0,674.5 1043.4,709.8C1054.8,745.0 1077.7,824.1 1084.6,846.9M1069.5,623.3C1072.4,633.2 1080.7,654.2 1087.3,682.3C1093.9,710.4 1103.8,752.7 1109.3,792.1C1114.7,831.4 1118.4,897.2 1120.2,918.3M1070.8,627.4C1079.1,641.2 1105.6,677.7 1120.2,709.8C1134.9,741.8 1149.9,787.5 1158.6,819.5C1167.3,851.5 1170.1,888.1 1172.4,901.8M1103.8,641.2C1111.5,652.6 1136.7,684.6 1150.4,709.8C1164.1,734.9 1176.5,760.1 1186.1,792.1C1195.7,824.1 1204.4,883.5 1208.0,901.8M1208.0,737.2C1210.8,744.0 1219.5,761.4 1224.5,778.3C1229.5,795.3 1235.9,828.6 1238.2,838.7M1199.8,704.3C1207.6,716.6 1235.0,754.6 1246.4,778.3C1257.9,802.1 1263.8,821.8 1268.4,846.9C1273.0,872.1 1273.0,915.5 1273.9,929.3M1046.1,630.2C1048.4,635.2 1056.7,658.1 1059.9,660.4C1063.1,662.6 1065.8,649.4 1065.4,643.9C1064.9,638.4 1058.5,630.2 1057.1,627.4M948.1,440.0C949.7,438.6 953.5,432.9 957.8,431.9C962.1,430.8 971.3,433.2 974.0,433.5M854.0,281.2C852.6,284.5 847.3,295.6 845.7,301.3C844.1,307.0 843.5,310.4 844.5,315.5C845.5,320.7 848.4,327.4 851.6,332.1C854.8,336.9 859.9,339.2 863.4,344.0C867.0,348.7 871.0,355.8 872.9,360.6C874.9,365.3 874.9,370.4 875.3,372.4M859.9,346.3C860.3,349.1 862.3,357.2 862.3,362.9C862.3,368.7 859.7,375.6 859.9,380.7C860.1,385.8 861.5,389.8 863.4,393.7C865.4,397.7 870.4,402.6 871.7,404.4M891.9,386.6C892.3,388.6 895.0,394.1 894.3,398.5C893.5,402.8 889.5,407.7 887.1,412.7C884.8,417.6 882.6,423.9 880.0,428.1C877.5,432.2 873.1,434.6 871.7,437.6C870.4,440.5 870.0,443.5 871.7,445.9C873.5,448.2 878.7,450.2 882.4,451.8C886.2,453.4 890.7,453.2 894.3,455.3C897.8,457.5 901.4,462.4 903.7,464.8C906.1,467.3 907.7,469.2 908.5,470.0M901.4,389.0C901.6,390.6 903.7,394.9 902.5,398.5C901.4,402.0 896.6,405.8 894.3,410.3C891.9,414.9 889.7,421.8 888.3,425.7C886.9,429.7 886.4,432.6 886.0,434.0M1046.9,280.0C1046.7,282.6 1047.3,290.9 1045.7,295.4C1044.1,299.9 1039.4,302.9 1037.4,307.2C1035.4,311.6 1034.0,316.9 1033.8,321.5C1033.6,326.0 1034.2,331.3 1036.2,334.5C1038.2,337.7 1042.9,337.7 1045.7,340.4C1048.4,343.2 1052.2,348.3 1052.8,351.1C1053.4,353.8 1051.8,355.2 1049.2,357.0C1046.7,358.8 1041.1,359.8 1037.4,361.7C1033.6,363.7 1028.9,366.1 1026.7,368.9C1024.6,371.6 1024.2,375.8 1024.4,378.3C1024.6,380.9 1026.3,382.5 1027.9,384.3C1029.5,386.0 1032.6,386.6 1033.8,389.0C1035.0,391.4 1033.2,394.9 1035.0,398.5C1036.8,402.0 1041.3,407.2 1044.5,410.3C1047.7,413.5 1051.4,414.7 1054.0,417.4C1056.5,420.2 1058.9,425.3 1059.9,426.9M1036.2,362.9L1029.1,378.3M1062.3,280.0C1062.9,282.4 1062.9,289.3 1065.8,294.2C1068.8,299.2 1075.7,304.5 1080.0,309.6C1084.4,314.8 1088.9,319.7 1091.9,325.0C1094.8,330.3 1097.0,335.3 1097.8,341.6C1098.6,347.9 1097.2,357.8 1096.6,362.9C1096.0,368.1 1094.6,370.8 1094.3,372.4M1064.6,348.7C1063.1,351.1 1057.1,358.2 1055.2,362.9C1053.2,367.7 1051.8,372.6 1052.8,377.1C1053.8,381.7 1058.1,386.6 1061.1,390.2C1064.0,393.7 1068.8,395.7 1070.6,398.5C1072.3,401.2 1071.5,405.4 1071.7,406.8M842.2,956.6C841.0,964.7 836.5,992.6 834.9,1005.4C833.3,1018.2 832.8,1028.7 832.4,1033.4M856.8,955.4C858.5,967.2 864.1,1020.8 866.6,1026.1C869.0,1031.4 870.9,998.5 871.5,987.1C872.1,975.7 870.4,962.7 870.2,957.8M888.5,949.3L882.4,1023.7M899.5,946.8C899.3,953.7 897.9,975.3 898.3,988.3C898.7,1001.3 901.3,1018.8 902.0,1024.9M910.5,962.7C908.9,965.7 901.3,974.9 900.7,981.0C900.1,987.1 905.8,996.2 906.8,999.3M936.1,945.6C933.5,948.3 924.3,955.2 920.2,961.5C916.2,967.8 913.5,977.1 911.7,983.4C909.9,989.7 907.2,994.8 909.3,999.3C911.3,1003.7 921.5,1008.4 923.9,1010.2M941.0,946.8C941.2,951.5 943.6,966.1 942.2,974.9C940.8,983.6 934.1,995.2 932.4,999.3M966.6,948.0C964.6,952.1 956.6,967.0 954.4,972.4C952.2,977.9 953.4,979.6 953.2,981.0M966.6,948.0L964.1,1000.5M998.3,945.6C997.5,949.5 992.8,958.8 993.4,968.8C994.0,978.7 1000.5,999.3 1002.0,1005.4M987.3,946.8C985.7,952.1 979.4,968.8 977.6,978.5C975.7,988.3 976.5,1000.9 976.3,1005.4M1008.0,945.6C1007.8,951.5 1006.6,971.2 1006.8,981.0C1007.0,990.7 1008.9,1000.3 1009.3,1004.1M1023.9,944.4C1023.3,948.5 1020.9,960.2 1020.2,968.8C1019.6,977.3 1017.8,989.1 1020.2,995.6C1022.7,1002.1 1032.4,1005.8 1034.9,1007.8M1059.3,946.8C1057.8,952.5 1051.5,972.0 1050.7,981.0C1049.9,989.9 1053.8,997.2 1054.4,1000.5M1036.1,946.8C1034.1,949.5 1026.1,954.6 1023.9,962.7C1021.7,970.8 1022.9,990.1 1022.7,995.6M828.8,960.2C827.8,965.7 823.7,984.0 822.7,993.2C821.7,1002.3 822.7,1011.5 822.7,1015.1M1075.9,943.9C1075.7,948.8 1074.8,965.2 1074.6,973.2C1074.4,981.1 1074.6,988.4 1074.6,991.5M1095.4,942.7C1095.0,945.7 1094.8,953.9 1092.9,961.0C1091.1,968.1 1085.8,979.7 1084.4,985.4C1083.0,991.1 1084.4,993.5 1084.4,995.1M1103.9,946.3C1103.9,949.8 1103.1,959.6 1103.9,967.1C1104.7,974.6 1108.0,987.4 1108.8,991.5M1127.1,932.9C1126.5,934.1 1124.2,937.6 1123.4,940.2C1122.6,942.9 1122.4,947.4 1122.2,948.8M1127.1,932.9C1128.3,936.6 1133.6,948.2 1134.4,954.9C1135.2,961.6 1134.0,967.1 1132.0,973.2C1129.9,979.3 1123.8,988.4 1122.2,991.5M1161.2,929.9L1151.5,961.0M1161.2,929.9L1160.0,991.5M1182.0,941.5L1175.9,1000.0M1182.0,941.5L1183.2,1000.0M1202.7,932.9L1201.5,991.5M1218.5,934.1C1217.9,941.7 1216.9,968.1 1214.9,979.3C1212.8,990.4 1207.8,997.6 1206.3,1001.2M1223.4,932.9L1221.0,990.2M1241.7,930.5C1240.9,934.6 1238.0,944.7 1236.8,954.9C1235.6,965.0 1234.8,985.4 1234.4,991.5M1241.7,930.5C1242.3,934.6 1243.7,946.1 1245.4,954.9C1247.0,963.6 1250.4,978.3 1251.5,982.9M1258.8,930.5C1259.8,934.6 1264.1,943.3 1264.9,954.9C1265.7,966.5 1263.9,992.5 1263.7,1000.0M1269.8,932.9C1271.4,937.6 1277.1,949.8 1279.5,961.0C1282.0,972.2 1283.6,993.5 1284.4,1000.0M1280.7,929.3C1283.6,933.5 1292.5,945.1 1297.8,954.9C1303.1,964.6 1310.0,982.3 1312.4,987.8M1219.8,990.2C1218.7,990.0 1215.9,987.2 1213.7,989.0C1211.4,990.9 1207.6,999.2 1206.3,1001.2"/><path stroke-width="2.3" d="M866.3,199.8L853.5,219.5M844.9,241.7C842.4,245.7 833.2,258.5 829.5,265.6C825.8,272.7 823.9,281.3 822.7,284.4M950.9,378.4C953.7,379.2 962.2,383.2 967.9,383.5C973.6,383.8 979.0,383.2 985.0,380.1C991.0,376.9 1000.7,367.3 1003.8,364.7M994.4,166.5C1003.1,171.2 1032.2,184.7 1046.5,194.7C1060.9,204.7 1073.0,216.2 1080.7,226.3C1088.4,236.4 1092.4,246.2 1092.7,255.3C1092.9,264.5 1084.1,276.7 1082.4,281.0M688.5,456.2C690.2,453.9 696.2,445.6 699.1,442.4C701.9,439.2 703.7,437.1 705.4,437.1C707.2,437.1 709.0,439.7 709.7,442.4C710.4,445.0 710.7,449.8 709.7,453.0C708.6,456.2 705.8,460.0 703.3,461.5C700.8,462.9 696.2,461.5 694.8,461.5M688.5,456.2C689.0,458.8 690.4,466.6 691.7,472.1C692.9,477.5 695.7,483.0 695.9,489.0C696.1,495.0 693.2,504.9 692.7,508.1M707.5,469.9C709.3,468.5 715.1,463.4 718.1,461.5C721.1,459.5 722.0,457.2 725.6,458.3C729.1,459.3 734.2,465.5 739.3,467.8C744.5,470.1 751.7,471.0 756.3,472.1C760.9,473.1 764.1,472.4 766.9,474.2C769.7,475.9 771.5,478.4 773.2,482.6C775.0,486.9 775.7,492.9 777.5,499.6C779.2,506.3 782.4,518.3 783.8,522.9C785.3,527.5 785.6,526.4 786.0,527.2M692.7,508.1C695.9,509.8 705.4,515.8 711.8,518.7C718.1,521.5 725.6,522.6 730.9,525.0C736.2,527.5 740.4,529.6 743.6,533.5C746.8,537.4 748.5,542.3 749.9,548.3C751.3,554.3 752.4,558.9 752.1,569.5C751.7,580.1 748.2,596.0 747.8,611.9C747.5,627.8 749.2,650.1 749.9,664.9C750.6,679.7 750.3,693.2 752.1,700.9C753.8,708.7 755.6,710.8 760.5,711.5C765.5,712.2 774.0,708.3 781.7,705.2C789.5,702.0 800.1,697.0 807.2,692.5C814.2,687.9 818.5,682.2 824.1,677.6C829.8,673.0 838.2,667.0 841.1,664.9M783.8,527.2C783.8,530.7 782.8,541.3 783.8,548.3C784.9,555.4 787.0,560.7 790.2,569.5C793.4,578.4 799.7,592.5 802.9,601.3C806.1,610.2 808.2,619.0 809.3,622.5M802.9,599.2C805.0,598.5 810.7,597.1 815.6,595.0C820.6,592.8 830.5,590.7 832.6,586.5C834.7,582.3 830.8,574.8 828.3,569.5C825.9,564.2 818.8,557.9 817.7,554.7C816.7,551.5 816.7,552.2 822.0,550.5C827.3,548.7 843.9,548.0 849.5,544.1C855.2,540.2 853.8,532.8 855.9,527.2C858.0,521.5 859.1,515.5 862.3,510.2C865.4,504.9 870.4,499.2 875.0,495.4C879.6,491.5 883.4,489.7 889.8,486.9C896.2,484.1 905.7,481.2 913.1,478.4C920.5,475.6 927.2,473.1 934.3,469.9C941.4,466.8 949.1,463.2 955.5,459.3C961.9,455.5 969.6,448.7 972.5,446.6M870.7,631.0C872.5,631.7 873.9,635.6 881.3,635.2C888.7,634.9 908.9,632.1 915.2,628.9C921.6,625.7 918.8,618.3 919.5,616.2M915.2,618.3C916.6,621.5 921.2,633.1 923.7,637.4C926.2,641.6 929.0,642.6 930.1,643.7M930.1,643.7C927.2,649.0 919.5,663.1 913.1,675.5C906.8,687.9 897.2,707.3 891.9,717.9C886.6,728.5 883.1,735.5 881.3,739.1M855.9,400.0C853.4,403.5 844.2,414.8 841.1,421.2C837.9,427.5 835.8,432.8 836.8,438.1C837.9,443.4 843.2,449.1 847.4,453.0C851.7,456.9 860.1,457.9 862.3,461.5C864.4,465.0 862.6,468.9 860.1,474.2C857.7,479.5 849.9,487.2 847.4,493.2C844.9,499.2 843.2,506.0 845.3,510.2C847.4,514.4 857.7,517.3 860.1,518.7M1190.7,361.5C1192.5,358.3 1198.1,348.4 1201.3,342.4C1204.5,336.4 1207.0,329.0 1209.8,325.4C1212.6,321.9 1215.1,321.2 1218.3,321.2C1221.5,321.2 1226.4,324.9 1228.9,325.4C1231.3,326.0 1228.9,323.0 1233.1,324.4C1237.4,325.8 1250.2,330.2 1254.3,333.9C1258.4,337.6 1256.8,342.0 1257.5,346.6C1258.2,351.2 1260.1,356.5 1258.5,361.5C1257.0,366.4 1252.2,370.6 1247.9,376.3C1243.7,381.9 1235.6,390.4 1233.1,395.4C1230.6,400.3 1229.6,397.8 1233.1,406.0C1236.6,414.1 1247.2,431.7 1254.3,444.1C1261.4,456.5 1269.1,467.1 1275.5,480.1C1281.9,493.2 1288.6,510.2 1292.5,522.5C1296.3,534.9 1296.7,546.9 1298.8,554.3C1300.9,561.7 1305.5,562.4 1305.2,567.0C1304.8,571.6 1303.4,578.3 1296.7,581.9C1290.0,585.4 1275.5,587.7 1264.9,588.2C1254.3,588.7 1242.6,586.8 1233.1,585.0C1223.6,583.3 1213.7,578.9 1207.7,577.6C1201.7,576.4 1198.9,577.6 1197.1,577.6M1190.7,361.5C1190.0,362.5 1187.5,363.9 1186.5,367.8C1185.4,371.7 1183.7,378.4 1184.4,384.8C1185.1,391.1 1187.2,399.6 1190.7,406.0C1194.3,412.3 1201.7,415.8 1205.6,422.9C1209.4,430.0 1210.9,438.8 1214.0,448.3C1217.2,457.9 1222.2,470.9 1224.6,480.1C1227.1,489.3 1228.2,496.4 1228.9,503.4C1229.6,510.5 1228.9,519.3 1228.9,522.5M1118.7,444.1C1123.3,444.5 1138.5,443.8 1146.2,446.2C1154.0,448.7 1158.6,454.7 1165.3,458.9C1172.0,463.2 1181.5,467.4 1186.5,471.7C1191.4,475.9 1194.3,479.4 1195.0,484.4C1195.7,489.3 1193.2,495.0 1190.7,501.3C1188.3,507.7 1183.0,515.5 1180.1,522.5C1177.3,529.6 1175.5,533.8 1173.8,543.7C1172.0,553.6 1175.2,574.4 1169.5,581.9C1163.9,589.3 1148.3,590.3 1139.9,588.2C1131.4,586.1 1125.0,577.3 1118.7,569.1C1112.3,561.0 1107.4,549.0 1101.7,539.5C1096.1,529.9 1089.0,520.8 1084.8,511.9C1080.5,503.1 1077.7,490.7 1076.3,486.5M1114.4,569.1C1114.1,573.0 1112.3,585.7 1112.3,592.5C1112.3,599.2 1114.4,603.8 1114.4,609.4C1114.4,615.1 1110.2,621.4 1112.3,626.4C1114.4,631.3 1124.7,637.0 1127.2,639.1M928.2,643.9C925.4,649.4 919.0,661.3 911.7,676.8C904.4,692.4 893.9,715.7 884.3,737.2C874.7,758.7 863.2,785.2 854.1,805.8C844.9,826.4 835.3,844.7 829.4,860.7C823.4,876.7 819.8,889.0 818.4,901.8C817.0,914.6 819.3,928.8 821.2,937.5C823.0,946.2 828.0,951.2 829.4,953.9M1114.7,626.1C1117.9,630.9 1124.8,644.1 1133.9,654.9C1143.1,665.6 1157.3,680.0 1169.6,690.5C1182.0,701.1 1198.0,710.2 1208.0,718.0C1218.1,725.8 1221.7,727.1 1230.0,737.2C1238.2,747.2 1249.2,764.6 1257.4,778.3C1265.6,792.1 1273.4,803.5 1279.4,819.5C1285.3,835.5 1290.1,856.3 1293.1,874.4C1296.1,892.4 1296.5,919.0 1297.2,927.9M903.5,1028.4C901.8,1035.9 896.2,1057.0 893.4,1073.4C890.7,1089.8 887.9,1117.8 886.8,1126.7M881.8,1140.1C878.2,1145.6 867.0,1163.4 860.1,1173.4C853.1,1183.4 845.6,1190.1 840.1,1200.1C834.5,1210.1 831.7,1219.0 826.7,1233.5C821.7,1247.9 816.7,1267.4 810.1,1286.8C803.4,1306.3 794.5,1330.2 786.7,1350.2C778.9,1370.2 770.6,1388.6 763.4,1406.9C756.1,1425.3 750.0,1444.7 743.4,1460.3C736.7,1475.8 727.2,1491.4 723.3,1500.3C719.5,1509.2 718.3,1508.4 720.0,1513.6C721.7,1518.9 731.1,1528.9 733.4,1532.0M1016.9,1010.0C1015.2,1018.3 1011.3,1043.4 1006.8,1060.0C1002.4,1076.7 996.8,1093.9 990.2,1110.1C983.5,1126.2 970.7,1149.0 966.8,1156.8M956.8,1176.8C952.9,1185.1 940.7,1211.8 933.5,1226.8C926.2,1241.8 922.4,1252.9 913.5,1266.8C904.6,1280.7 891.2,1296.3 880.1,1310.2C869.0,1324.1 856.8,1336.3 846.8,1350.2C836.7,1364.1 824.5,1386.3 820.1,1393.6M820.1,1393.6C819.5,1396.3 816.2,1405.8 816.7,1410.2C817.3,1414.7 824.0,1415.2 823.4,1420.3C822.9,1425.3 816.2,1432.5 813.4,1440.3C810.6,1448.0 808.4,1456.9 806.7,1466.9C805.1,1477.0 807.3,1489.5 803.4,1500.3C799.5,1511.1 786.7,1526.7 783.4,1532.0M1115.2,1005.0C1115.5,1015.3 1115.5,1048.1 1116.9,1066.7C1118.3,1085.3 1120.8,1102.3 1123.6,1116.7C1126.4,1131.2 1131.9,1147.3 1133.6,1153.4M1136.9,1180.1C1136.9,1192.3 1135.3,1233.5 1136.9,1253.5C1138.6,1273.5 1143.0,1284.1 1146.9,1300.2C1150.8,1316.3 1158.1,1330.8 1160.3,1350.2C1162.5,1369.7 1162.5,1396.3 1160.3,1416.9C1158.1,1437.5 1151.9,1459.7 1146.9,1473.6C1141.9,1487.5 1134.1,1490.6 1130.3,1500.3C1126.4,1510.0 1124.7,1526.7 1123.6,1532.0M1222.0,1006.7C1222.8,1016.7 1227.3,1043.9 1227.0,1066.7C1226.7,1089.5 1221.4,1130.6 1220.3,1143.4M1217.0,1166.8C1218.6,1173.4 1224.8,1192.3 1227.0,1206.8C1229.2,1221.2 1231.4,1237.9 1230.3,1253.5C1229.2,1269.0 1223.6,1284.1 1220.3,1300.2C1217.0,1316.3 1212.5,1333.5 1210.3,1350.2C1208.1,1366.9 1205.3,1386.3 1207.0,1400.2C1208.6,1414.1 1219.2,1419.7 1220.3,1433.6C1221.4,1447.5 1215.9,1467.2 1213.6,1483.6C1211.4,1500.0 1208.1,1523.9 1207.0,1532.0M925.4,399.4C929.2,401.6 940.5,409.3 948.1,412.4C955.6,415.5 963.7,417.0 970.7,418.1C977.8,419.2 984.3,420.4 990.2,418.9C996.1,417.4 1001.0,413.8 1006.4,409.2C1011.8,404.6 1019.9,394.3 1022.6,391.3M1035.6,514.5C1039.4,512.6 1051.8,508.3 1058.3,503.2C1064.7,498.0 1070.4,491.3 1074.5,483.7C1078.5,476.2 1079.6,466.7 1082.6,457.8C1085.5,448.9 1088.2,435.4 1092.3,430.2C1096.3,425.1 1102.3,426.2 1106.9,427.0C1111.5,427.8 1117.7,433.7 1119.8,435.1M1115.0,569.6C1114.2,573.1 1110.4,584.5 1110.1,590.7C1109.8,596.9 1113.4,602.0 1113.4,606.9C1113.4,611.7 1109.3,616.3 1110.1,619.8C1110.9,623.3 1116.9,626.6 1118.2,627.9M829.1,280.0C827.7,283.9 823.6,294.2 820.8,303.7C818.0,313.2 812.5,329.4 812.5,336.9C812.5,344.4 816.3,344.8 820.8,348.7C825.3,352.7 835.0,356.6 839.8,360.6C844.5,364.5 847.1,368.1 849.2,372.4C851.4,376.7 852.8,381.1 852.8,386.6C852.8,392.1 851.2,399.7 849.2,405.6C847.3,411.5 842.9,416.8 840.9,422.2C839.0,427.5 837.0,432.6 837.4,437.6C837.8,442.5 840.2,448.6 843.3,451.8C846.5,454.9 853.2,454.3 856.3,456.5C859.5,458.7 861.5,462.6 862.3,464.8C863.1,467.1 861.3,469.2 861.1,470.0M831.5,303.7C829.9,308.0 822.0,323.2 822.0,329.8C822.0,336.3 827.3,337.9 831.5,342.8C835.6,347.7 844.3,356.6 846.9,359.4M831.5,303.7C832.1,306.7 833.2,313.6 835.0,321.5C836.8,329.4 840.2,344.8 842.1,351.1C844.1,357.4 846.1,358.0 846.9,359.4M1081.2,280.0C1081.0,282.4 1079.4,289.9 1080.0,294.2C1080.6,298.6 1082.0,302.9 1084.8,306.1C1087.5,309.2 1091.7,310.6 1096.6,313.2C1101.6,315.7 1108.5,318.1 1114.4,321.5C1120.3,324.8 1128.0,329.2 1132.2,333.3C1136.3,337.5 1138.9,341.8 1139.3,346.3C1139.7,350.9 1137.3,355.8 1134.5,360.6C1131.8,365.3 1125.4,370.4 1122.7,374.8C1119.9,379.1 1118.3,383.1 1117.9,386.6C1117.5,390.2 1117.9,393.7 1120.3,396.1C1122.7,398.5 1127.2,398.5 1132.2,400.8C1137.1,403.2 1147.4,406.8 1149.9,410.3C1152.5,413.9 1148.9,418.2 1147.6,422.2C1146.2,426.1 1144.2,430.5 1141.6,434.0C1139.1,437.6 1133.7,441.9 1132.2,443.5M825.1,952.9C822.7,956.2 814.6,965.7 810.5,972.4C806.4,979.1 803.6,985.7 800.7,993.2C797.9,1000.7 794.6,1013.5 793.4,1017.6M793.4,1017.6C795.2,1017.6 800.9,1016.3 804.4,1017.6C807.8,1018.8 810.1,1022.7 814.1,1024.9C818.2,1027.0 825.7,1028.9 828.8,1030.4C831.8,1031.8 830.4,1033.1 832.4,1033.4C834.5,1033.7 838.3,1032.6 841.0,1032.2C843.6,1031.8 844.6,1030.9 848.3,1031.0C852.0,1031.1 857.0,1033.4 862.9,1032.8C868.8,1032.2 877.2,1028.3 883.7,1027.3C890.2,1026.3 895.2,1027.1 902.0,1026.7C908.7,1026.3 920.2,1027.2 923.9,1024.9C927.6,1022.5 923.5,1015.5 923.9,1012.7C924.3,1009.8 922.9,1008.2 926.3,1007.8C929.8,1007.4 938.5,1009.8 944.6,1010.2C950.7,1010.7 959.7,1010.9 962.9,1010.2C966.2,1009.6 962.1,1007.0 964.1,1006.6C966.2,1006.2 969.2,1007.4 975.1,1007.8C981.0,1008.2 992.4,1009.4 999.5,1009.0C1006.6,1008.6 1013.7,1007.2 1017.8,1005.4C1021.9,1003.5 1020.9,997.6 1023.9,998.0C1027.0,998.5 1032.4,1005.8 1036.1,1007.8C1039.8,1009.8 1041.9,1011.3 1045.9,1010.2C1049.8,1009.2 1057.6,1003.1 1060.0,1001.7M1296.0,927.4C1297.3,929.0 1300.5,931.4 1303.9,936.6C1307.3,941.8 1311.4,950.6 1316.1,958.5C1320.8,966.5 1329.3,979.9 1332.0,984.1M1060.0,1000.0C1064.1,1000.6 1078.3,1004.1 1084.4,1003.7C1090.5,1003.3 1091.5,997.8 1096.6,997.6C1101.7,997.4 1110.4,1001.9 1114.9,1002.4C1119.3,1002.9 1120.2,999.8 1123.4,1000.6C1126.7,1001.4 1130.3,1007.7 1134.4,1007.3C1138.5,1006.9 1142.9,998.8 1147.8,998.2C1152.7,997.6 1159.0,1001.7 1163.7,1003.7C1168.3,1005.6 1169.8,1009.1 1175.9,1009.8C1182.0,1010.4 1194.1,1008.9 1200.2,1007.3C1206.3,1005.7 1209.2,1000.2 1212.4,1000.0C1215.7,999.8 1214.7,1005.1 1219.8,1006.1C1224.8,1007.1 1238.0,1006.7 1242.9,1006.1C1247.8,1005.5 1246.6,1002.2 1249.0,1002.4C1251.5,1002.6 1254.5,1007.3 1257.6,1007.3C1260.6,1007.3 1263.7,1003.5 1267.3,1002.4C1271.0,1001.4 1275.4,1001.2 1279.5,1001.2C1283.6,1001.2 1287.0,1003.9 1291.7,1002.4C1296.4,1001.0 1303.1,994.1 1307.6,992.7C1312.0,991.3 1314.5,995.3 1318.5,993.9C1322.6,992.5 1329.7,985.8 1332.0,984.1M1038.6,428.1C1042.3,427.9 1053.4,427.1 1061.1,426.9C1068.8,426.7 1076.9,426.5 1084.8,426.9C1092.7,427.3 1103.3,427.3 1108.5,429.3C1113.6,431.2 1113.6,436.2 1115.6,438.7C1117.5,441.3 1115.6,443.5 1120.3,444.7C1125.1,445.9 1137.4,443.7 1144.0,445.9C1150.6,448.0 1157.3,455.7 1160.0,457.7"/><path stroke-width="3" d="M1224.6,363.6C1226.0,361.8 1230.6,355.5 1233.1,353.0C1235.6,350.5 1238.4,349.4 1239.5,348.7"/><path stroke-width="2.0" d="M950.8,378.2C953.2,379.5 960.8,384.1 964.8,385.7C968.8,387.3 971.0,388.3 974.8,387.9C978.6,387.5 982.9,387.2 987.8,383.2C992.6,379.3 1001.1,367.4 1003.7,364.3"/><path stroke-width="3.6" d="M900.0,335.8C901.0,334.7 903.6,331.0 905.9,328.8C908.3,326.7 910.6,324.7 913.9,322.9C917.3,321.0 921.6,318.5 925.9,317.9C930.2,317.2 935.9,318.0 939.9,318.9C943.9,319.8 948.2,322.6 949.8,323.4M975.3,312.9C976.9,311.7 981.0,308.0 984.8,305.9C988.5,303.8 993.1,301.2 997.7,300.4C1002.4,299.6 1007.9,299.6 1012.7,300.9C1017.5,302.2 1024.3,307.1 1026.7,308.4"/><path stroke-width="2.4" d="M901.0,331.8C902.0,333.0 904.8,337.0 906.9,338.8C909.1,340.7 912.8,342.2 913.9,342.8"/><path stroke-width="2.6" d="M1017.7,306.9C1018.2,307.7 1020.7,309.7 1020.7,311.9C1020.7,314.0 1018.2,318.5 1017.7,319.9"/><path stroke-width="1.6" d="M985.8,323.9C986.8,324.5 989.4,327.1 991.8,327.8C994.1,328.6 996.7,329.0 999.7,328.3C1002.7,327.7 1008.0,324.6 1009.7,323.9M921.9,344.8C922.9,345.0 925.6,346.0 927.9,345.8C930.2,345.6 933.5,344.8 935.9,343.8C938.2,342.8 940.9,340.5 941.9,339.8"/><circle cx="928.6" cy="332.2" r="12.8" stroke-width="2"/><circle cx="998.7" cy="315.1" r="13.3" stroke-width="2"/></g></svg></div>
<div id="shadow" class="a"></div>
<svg class="a" style="left:1909px;top:132px" width="479" height="1495" viewBox="1909 132 479 1495">
<defs>
<linearGradient id="lg" x1="0" y1="0" x2="0" y2="1"><stop offset="0" stop-color="#393939"/><stop offset="1" stop-color="#4a4a4a"/></linearGradient>
<linearGradient id="fg" x1="0" y1="0" x2="0" y2="1"><stop offset="0" stop-color="#d2d2d2"/><stop offset="1" stop-color="#9a9a9a"/></linearGradient><linearGradient id="fb" x1="0" y1="0" x2="0" y2="1"><stop offset="0" stop-color="#e0e0e0"/><stop offset="1" stop-color="#b8b8b8"/></linearGradient><pattern id="chk" width="16" height="16" patternUnits="userSpaceOnUse"><rect width="16" height="16" fill="#f4f4f4"/><rect width="8" height="8" fill="#d6d6d6"/><rect x="8" y="8" width="8" height="8" fill="#d6d6d6"/></pattern>
<g id="gear"><path d="M-4.79,-17.87L-4.58,-23.56L4.58,-23.56L4.79,-17.87A18.5,18.5 0 0 1 9.25,-16.02L13.42,-19.90L19.90,-13.42L16.02,-9.25A18.5,18.5 0 0 1 17.87,-4.79L23.56,-4.58L23.56,4.58L17.87,4.79A18.5,18.5 0 0 1 16.02,9.25L19.90,13.42L13.42,19.90L9.25,16.02A18.5,18.5 0 0 1 4.79,17.87L4.58,23.56L-4.58,23.56L-4.79,17.87A18.5,18.5 0 0 1 -9.25,16.02L-13.42,19.90L-19.90,13.42L-16.02,9.25A18.5,18.5 0 0 1 -17.87,4.79L-23.56,4.58L-23.56,-4.58L-17.87,-4.79A18.5,18.5 0 0 1 -16.02,-9.25L-19.90,-13.42L-13.42,-19.90L-9.25,-16.02A18.5,18.5 0 0 1 -4.79,-17.87ZM0,-8.3A8.3,8.3 0 1 0 0,8.3A8.3,8.3 0 1 0 0,-8.3Z" fill="#f0f0f0" fill-rule="evenodd"/></g>
</defs>
<rect x="1909" y="132" width="479" height="100" fill="#1e1e1e"/>
<rect x="1909" y="232" width="479" height="418" fill="#3d3d3d"/>
<text x="2371" y="265" fill="#f2f2f2" font-size="25" text-anchor="end" font-family="Liberation Sans">100%</text>
<rect x="2200" y="307" width="105" height="6" fill="#e6e6e6"/>
<circle cx="2305.5" cy="310" r="19.5" fill="#dcdcde"/>
<rect x="2346" y="308.5" width="18" height="5" fill="#f4f4f4"/><rect x="2352.5" y="302" width="5" height="18" fill="#f4f4f4"/>
<rect x="1909" y="340" width="479" height="1.5" fill="#9a9a9a"/>
<rect x="1990" y="354" width="381" height="63" rx="10" fill="#4a4a4a"/>
<text x="2304" y="393" fill="#f2f2f2" font-size="26" text-anchor="end" font-family="Liberation Sans">Normal</text>
<path d="M2344,373 L2356,385.5 L2344,398" stroke="#c8c8c8" stroke-width="3.5" fill="none"/>
<rect x="1909" y="428.5" width="479" height="1.5" fill="#9a9a9a"/>
<rect x="1990" y="443" width="381" height="63" rx="10" fill="#4a4a4a"/>
<text x="2304" y="482.5" fill="#f2f2f2" font-size="26" text-anchor="end" font-family="Liberation Sans">Lock</text>
<rect x="1909" y="517" width="479" height="1.5" fill="#d0d0d0"/>
<rect x="1909" y="518.5" width="479" height="131" fill="#2b2b2b"/>
<rect x="1909" y="650" width="479" height="977" fill="url(#lg)"/>
<!-- selected row -->
<rect x="1909" y="913.5" width="369" height="131" fill="#4c7fb0"/>
<!-- row lines -->
<g stroke="#8a8a8a" stroke-width="1.5">
<line x1="1929" y1="650" x2="1929" y2="1177"/><line x1="2019" y1="650" x2="2019" y2="1177"/><line x1="2153" y1="650" x2="2153" y2="1177"/>
<line x1="1998.5" y1="1177" x2="1998.5" y2="1441"/><line x1="2133" y1="1177" x2="2133" y2="1441"/>
<line x1="1929" y1="1441" x2="1929" y2="1573"/><line x1="2019" y1="1441" x2="2019" y2="1573"/><line x1="2153" y1="1441" x2="2153" y2="1573"/>
</g>
<line x1="1910" y1="132" x2="1910" y2="1627" stroke="#151515" stroke-width="2"/>
<!-- thumbnails -->
<rect x="2040" y="1000" width="92" height="44" fill="url(#chk)"/>
<rect x="2040" y="1045" width="92" height="132" fill="url(#chk)"/>
<rect x="2040" y="1441" width="92" height="132" fill="url(#chk)"/>
<path id="tf" d="M866.3,171.6C870.1,171.3 881.1,168.7 889.3,169.6C897.6,170.4 911.4,175.6 915.8,176.8M866.3,171.6C866.7,174.8 867.7,182.6 868.8,190.4C870.0,198.3 872.4,213.9 873.1,218.6M873.1,218.6C877.0,216.8 888.6,211.2 896.2,207.5C903.7,203.8 914.7,198.3 918.4,196.4M915.8,176.8L944.9,172.5M944.9,172.5C945.0,174.3 945.4,180.3 945.7,183.6C946.0,186.9 946.4,190.7 946.6,192.1M918.4,196.4C921.0,196.1 929.1,195.4 933.8,194.7C938.5,194.0 944.4,192.6 946.6,192.1M915.8,176.8C916.0,178.5 916.3,183.7 916.7,187.0C917.1,190.3 918.1,194.8 918.4,196.4M944.9,172.5C947.0,171.2 953.0,166.8 957.7,164.8C962.4,162.8 967.4,160.8 973.1,160.5C978.8,160.2 988.7,162.7 991.9,163.1M991.9,163.1C992.4,165.1 995.0,171.6 995.3,175.0C995.6,178.5 994.7,178.9 993.6,183.6C992.4,188.3 989.3,200.0 988.4,203.2M946.6,192.1C950.1,193.3 961.0,197.1 967.9,199.0C974.9,200.8 985.0,202.5 988.4,203.2M994.4,166.5C998.6,168.5 1010.5,173.8 1019.2,178.5C1027.9,183.2 1042.0,192.0 1046.5,194.7M1046.5,194.7C1043.4,198.0 1031.0,206.9 1027.7,214.3C1024.5,221.7 1027.0,235.0 1026.9,239.1M1012.4,200.7C1012.1,202.7 1013.2,210.4 1010.7,212.6C1008.1,214.9 1003.2,215.8 997.0,214.3C990.7,212.9 980.8,207.2 973.1,204.1C965.4,201.0 954.6,197.0 950.9,195.5M899.6,213.5C896.8,215.6 887.6,222.7 882.5,226.3C877.4,229.9 871.5,234.6 868.8,234.8C866.1,235.1 866.7,229.1 866.3,228.0M853.5,219.5C850.8,222.9 838.7,236.3 837.2,240.0C835.8,243.7 840.8,237.7 844.9,241.7C849.1,245.7 857.3,262.5 862.0,263.9C866.7,265.3 868.6,255.6 873.1,250.2C877.7,244.8 886.6,234.6 889.3,231.4M866.3,199.8L853.5,219.5M844.9,241.7C842.4,245.7 833.2,258.5 829.5,265.6C825.8,272.7 823.9,281.3 822.7,284.4M889.3,233.1C887.6,236.8 881.4,247.1 879.1,255.3C876.8,263.6 876.2,278.1 875.7,282.7M894.5,238.3C894.2,242.8 892.9,258.2 892.8,265.6C892.6,273.0 893.5,279.8 893.6,282.7M897.9,282.7C898.2,279.3 897.6,269.0 899.6,262.2C901.6,255.3 904.7,249.1 909.8,241.7C915.0,234.3 926.9,221.7 930.4,217.8M906.4,262.2C907.9,259.9 912.4,252.8 915.0,248.5C917.5,244.2 919.5,240.3 921.8,236.6C924.1,232.9 927.5,228.0 928.6,226.3M903.0,296.4C903.6,292.9 904.4,281.5 906.4,275.8C908.4,270.2 913.6,264.5 915.0,262.2M946.6,248.5C946.2,251.9 943.0,262.8 944.0,269.0C945.0,275.3 950.0,282.1 952.6,286.1C955.1,290.1 957.1,292.9 959.4,292.9C961.7,292.9 964.0,287.5 966.2,286.1C968.5,284.7 971.9,284.7 973.1,284.4M940.6,224.6C941.3,227.4 943.9,237.7 944.9,241.7C945.9,245.7 946.3,247.4 946.6,248.5M973.1,284.4C976.5,283.3 986.4,278.4 993.6,277.6C1000.7,276.7 1009.5,278.7 1015.8,279.3C1022.0,279.8 1026.6,280.1 1031.2,281.0C1035.7,281.8 1041.1,283.8 1043.1,284.4M899.6,325.4C902.4,324.3 911.0,319.8 916.7,318.6C922.4,317.3 928.2,317.1 933.8,317.7C939.3,318.3 947.3,321.3 950.0,322.0M974.8,311.7C977.3,310.0 985.0,303.8 990.2,301.5C995.3,299.2 999.5,297.5 1005.5,298.1C1011.5,298.6 1022.6,303.8 1026.0,304.9M950.9,378.4C953.7,379.2 962.2,383.2 967.9,383.5C973.6,383.8 979.0,383.2 985.0,380.1C991.0,376.9 1000.7,367.3 1003.8,364.7M994.4,166.5C1003.1,171.2 1032.2,184.7 1046.5,194.7C1060.9,204.7 1073.0,216.2 1080.7,226.3C1088.4,236.4 1092.4,246.2 1092.7,255.3C1092.9,264.5 1084.1,276.7 1082.4,281.0M688.5,456.2C690.2,453.9 696.2,445.6 699.1,442.4C701.9,439.2 703.7,437.1 705.4,437.1C707.2,437.1 709.0,439.7 709.7,442.4C710.4,445.0 710.7,449.8 709.7,453.0C708.6,456.2 705.8,460.0 703.3,461.5C700.8,462.9 696.2,461.5 694.8,461.5M688.5,456.2C689.0,458.8 690.4,466.6 691.7,472.1C692.9,477.5 695.7,483.0 695.9,489.0C696.1,495.0 693.2,504.9 692.7,508.1M707.5,469.9C709.3,468.5 715.1,463.4 718.1,461.5C721.1,459.5 722.0,457.2 725.6,458.3C729.1,459.3 734.2,465.5 739.3,467.8C744.5,470.1 751.7,471.0 756.3,472.1C760.9,473.1 764.1,472.4 766.9,474.2C769.7,475.9 771.5,478.4 773.2,482.6C775.0,486.9 775.7,492.9 777.5,499.6C779.2,506.3 782.4,518.3 783.8,522.9C785.3,527.5 785.6,526.4 786.0,527.2M711.8,467.8C715.7,469.2 727.7,474.5 735.1,476.3C742.5,478.1 751.9,477.7 756.3,478.4C760.7,479.1 761.2,479.5 761.6,480.5C761.9,481.6 760.4,484.4 758.4,484.8C756.5,485.1 751.3,483.0 749.9,482.6M698.0,483.7C700.3,482.1 706.3,474.7 711.8,474.2C717.3,473.6 724.5,478.1 730.9,480.5C737.2,483.0 744.3,487.2 749.9,489.0C755.6,490.8 762.6,489.7 764.8,491.1C766.9,492.5 764.8,496.8 762.6,497.5C760.5,498.2 753.8,495.7 752.1,495.4M692.7,508.1C695.9,509.8 705.4,515.8 711.8,518.7C718.1,521.5 725.6,522.6 730.9,525.0C736.2,527.5 740.4,529.6 743.6,533.5C746.8,537.4 748.5,542.3 749.9,548.3C751.3,554.3 752.4,558.9 752.1,569.5C751.7,580.1 748.2,596.0 747.8,611.9C747.5,627.8 749.2,650.1 749.9,664.9C750.6,679.7 750.3,693.2 752.1,700.9C753.8,708.7 755.6,710.8 760.5,711.5C765.5,712.2 774.0,708.3 781.7,705.2C789.5,702.0 800.1,697.0 807.2,692.5C814.2,687.9 818.5,682.2 824.1,677.6C829.8,673.0 838.2,667.0 841.1,664.9M783.8,527.2C783.8,530.7 782.8,541.3 783.8,548.3C784.9,555.4 787.0,560.7 790.2,569.5C793.4,578.4 799.7,592.5 802.9,601.3C806.1,610.2 808.2,619.0 809.3,622.5M802.9,599.2C805.0,598.5 810.7,597.1 815.6,595.0C820.6,592.8 830.5,590.7 832.6,586.5C834.7,582.3 830.8,574.8 828.3,569.5C825.9,564.2 818.8,557.9 817.7,554.7C816.7,551.5 816.7,552.2 822.0,550.5C827.3,548.7 843.9,548.0 849.5,544.1C855.2,540.2 853.8,532.8 855.9,527.2C858.0,521.5 859.1,515.5 862.3,510.2C865.4,504.9 870.4,499.2 875.0,495.4C879.6,491.5 883.4,489.7 889.8,486.9C896.2,484.1 905.7,481.2 913.1,478.4C920.5,475.6 927.2,473.1 934.3,469.9C941.4,466.8 949.1,463.2 955.5,459.3C961.9,455.5 969.6,448.7 972.5,446.6M815.6,595.0C819.5,597.1 831.2,602.7 838.9,607.7C846.7,612.6 857.7,620.4 862.3,624.6C866.8,628.9 866.5,629.9 866.5,633.1C866.5,636.3 863.3,637.4 862.3,643.7C861.2,650.1 862.3,667.4 860.1,671.3C858.0,675.1 852.0,669.1 849.5,667.0C847.1,664.9 846.0,660.0 845.3,658.5M811.4,628.9C813.9,628.5 824.1,625.0 826.2,626.8C828.3,628.5 822.7,637.7 824.1,639.5C825.5,641.2 833.3,636.3 834.7,637.4C836.1,638.4 831.2,644.8 832.6,645.8C834.0,646.9 841.8,641.9 843.2,643.7C844.6,645.5 840.0,654.7 841.1,656.4C842.1,658.2 848.1,654.7 849.5,654.3M870.7,631.0C872.5,631.7 873.9,635.6 881.3,635.2C888.7,634.9 908.9,632.1 915.2,628.9C921.6,625.7 918.8,618.3 919.5,616.2M915.2,618.3C916.6,621.5 921.2,633.1 923.7,637.4C926.2,641.6 929.0,642.6 930.1,643.7M930.1,643.7C927.2,649.0 919.5,663.1 913.1,675.5C906.8,687.9 897.2,707.3 891.9,717.9C886.6,728.5 883.1,735.5 881.3,739.1M855.9,400.0C853.4,403.5 844.2,414.8 841.1,421.2C837.9,427.5 835.8,432.8 836.8,438.1C837.9,443.4 843.2,449.1 847.4,453.0C851.7,456.9 860.1,457.9 862.3,461.5C864.4,465.0 862.6,468.9 860.1,474.2C857.7,479.5 849.9,487.2 847.4,493.2C844.9,499.2 843.2,506.0 845.3,510.2C847.4,514.4 857.7,517.3 860.1,518.7M855.9,419.1C854.1,422.3 844.6,433.9 845.3,438.1C846.0,442.4 856.6,442.7 860.1,444.5C863.7,446.3 865.4,448.0 866.5,448.7M936.4,400.0C935.0,404.6 928.7,419.4 927.9,427.5C927.2,435.7 930.4,442.7 932.2,448.7C934.0,454.7 940.0,459.7 938.5,463.6C937.1,467.5 931.1,469.6 923.7,472.1C916.3,474.5 899.0,477.4 894.0,478.4M1190.7,361.5C1192.5,358.3 1198.1,348.4 1201.3,342.4C1204.5,336.4 1207.0,329.0 1209.8,325.4C1212.6,321.9 1215.1,321.2 1218.3,321.2C1221.5,321.2 1226.4,324.9 1228.9,325.4C1231.3,326.0 1228.9,323.0 1233.1,324.4C1237.4,325.8 1250.2,330.2 1254.3,333.9C1258.4,337.6 1256.8,342.0 1257.5,346.6C1258.2,351.2 1260.1,356.5 1258.5,361.5C1257.0,366.4 1252.2,370.6 1247.9,376.3C1243.7,381.9 1235.6,390.4 1233.1,395.4C1230.6,400.3 1229.6,397.8 1233.1,406.0C1236.6,414.1 1247.2,431.7 1254.3,444.1C1261.4,456.5 1269.1,467.1 1275.5,480.1C1281.9,493.2 1288.6,510.2 1292.5,522.5C1296.3,534.9 1296.7,546.9 1298.8,554.3C1300.9,561.7 1305.5,562.4 1305.2,567.0C1304.8,571.6 1303.4,578.3 1296.7,581.9C1290.0,585.4 1275.5,587.7 1264.9,588.2C1254.3,588.7 1242.6,586.8 1233.1,585.0C1223.6,583.3 1213.7,578.9 1207.7,577.6C1201.7,576.4 1198.9,577.6 1197.1,577.6M1190.7,361.5C1190.0,362.5 1187.5,363.9 1186.5,367.8C1185.4,371.7 1183.7,378.4 1184.4,384.8C1185.1,391.1 1187.2,399.6 1190.7,406.0C1194.3,412.3 1201.7,415.8 1205.6,422.9C1209.4,430.0 1210.9,438.8 1214.0,448.3C1217.2,457.9 1222.2,470.9 1224.6,480.1C1227.1,489.3 1228.2,496.4 1228.9,503.4C1229.6,510.5 1228.9,519.3 1228.9,522.5M1190.7,361.5C1191.8,362.5 1193.6,367.1 1197.1,367.8C1200.6,368.5 1208.0,367.8 1211.9,365.7C1215.8,363.6 1217.6,360.8 1220.4,355.1C1223.2,349.4 1227.5,335.7 1228.9,331.8M1211.9,365.7C1213.7,361.8 1219.0,348.4 1222.5,342.4C1226.0,336.4 1231.3,331.8 1233.1,329.7M1224.6,363.6C1226.0,361.8 1230.6,355.5 1233.1,353.0C1235.6,350.5 1238.4,349.4 1239.5,348.7M1118.7,444.1C1123.3,444.5 1138.5,443.8 1146.2,446.2C1154.0,448.7 1158.6,454.7 1165.3,458.9C1172.0,463.2 1181.5,467.4 1186.5,471.7C1191.4,475.9 1194.3,479.4 1195.0,484.4C1195.7,489.3 1193.2,495.0 1190.7,501.3C1188.3,507.7 1183.0,515.5 1180.1,522.5C1177.3,529.6 1175.5,533.8 1173.8,543.7C1172.0,553.6 1175.2,574.4 1169.5,581.9C1163.9,589.3 1148.3,590.3 1139.9,588.2C1131.4,586.1 1125.0,577.3 1118.7,569.1C1112.3,561.0 1107.4,549.0 1101.7,539.5C1096.1,529.9 1089.0,520.8 1084.8,511.9C1080.5,503.1 1077.7,490.7 1076.3,486.5M1190.7,499.2C1194.3,499.2 1205.6,498.5 1211.9,499.2C1218.3,499.9 1226.0,502.7 1228.9,503.4M1207.7,509.8C1208.4,513.0 1213.3,526.8 1211.9,528.9C1210.5,531.0 1201.0,521.5 1199.2,522.5C1197.4,523.6 1203.1,533.5 1201.3,535.2C1199.6,537.0 1190.0,531.3 1188.6,533.1C1187.2,534.9 1193.6,543.0 1192.8,545.8C1192.1,548.7 1185.1,546.5 1184.4,550.1C1183.7,553.6 1189.3,562.8 1188.6,567.0C1187.9,571.3 1182.3,571.6 1180.1,575.5C1178.0,579.4 1174.8,589.3 1175.9,590.3C1177.0,591.4 1183.3,582.6 1186.5,581.9C1189.7,581.1 1193.2,586.8 1195.0,586.1C1196.7,585.4 1196.7,579.0 1197.1,577.6M1000.0,433.5C1007.1,432.5 1031.8,428.2 1042.4,427.2C1053.0,426.1 1055.1,426.8 1063.6,427.2C1072.1,427.5 1085.5,428.6 1093.2,429.3C1101.0,430.0 1106.0,428.9 1110.2,431.4C1114.4,433.9 1117.3,442.0 1118.7,444.1M1033.9,514.0C1038.1,511.6 1052.3,506.6 1059.3,499.2C1066.4,491.8 1071.3,480.1 1076.3,469.5C1081.2,458.9 1086.9,441.3 1089.0,435.6M1114.4,569.1C1114.1,573.0 1112.3,585.7 1112.3,592.5C1112.3,599.2 1114.4,603.8 1114.4,609.4C1114.4,615.1 1110.2,621.4 1112.3,626.4C1114.4,631.3 1124.7,637.0 1127.2,639.1M1019.1,448.3C1020.8,455.4 1027.2,476.6 1029.7,490.7C1032.1,504.9 1033.6,519.7 1033.9,533.1C1034.3,546.5 1033.2,562.4 1031.8,571.3C1030.4,580.1 1026.5,583.6 1025.4,586.1M928.2,643.9C925.4,649.4 919.0,661.3 911.7,676.8C904.4,692.4 893.9,715.7 884.3,737.2C874.7,758.7 863.2,785.2 854.1,805.8C844.9,826.4 835.3,844.7 829.4,860.7C823.4,876.7 819.8,889.0 818.4,901.8C817.0,914.6 819.3,928.8 821.2,937.5C823.0,946.2 828.0,951.2 829.4,953.9M1114.7,626.1C1117.9,630.9 1124.8,644.1 1133.9,654.9C1143.1,665.6 1157.3,680.0 1169.6,690.5C1182.0,701.1 1198.0,710.2 1208.0,718.0C1218.1,725.8 1221.7,727.1 1230.0,737.2C1238.2,747.2 1249.2,764.6 1257.4,778.3C1265.6,792.1 1273.4,803.5 1279.4,819.5C1285.3,835.5 1290.1,856.3 1293.1,874.4C1296.1,892.4 1296.5,919.0 1297.2,927.9M928.2,643.9C935.5,642.1 955.6,635.7 972.1,632.9C988.5,630.2 1010.9,629.0 1026.9,627.4C1042.9,625.8 1053.5,623.6 1068.1,623.3C1082.7,623.1 1107.0,625.6 1114.7,626.1M903.5,1028.4C901.8,1035.9 896.2,1057.0 893.4,1073.4C890.7,1089.8 887.9,1117.8 886.8,1126.7M881.8,1140.1C878.2,1145.6 867.0,1163.4 860.1,1173.4C853.1,1183.4 845.6,1190.1 840.1,1200.1C834.5,1210.1 831.7,1219.0 826.7,1233.5C821.7,1247.9 816.7,1267.4 810.1,1286.8C803.4,1306.3 794.5,1330.2 786.7,1350.2C778.9,1370.2 770.6,1388.6 763.4,1406.9C756.1,1425.3 750.0,1444.7 743.4,1460.3C736.7,1475.8 727.2,1491.4 723.3,1500.3C719.5,1509.2 718.3,1508.4 720.0,1513.6C721.7,1518.9 731.1,1528.9 733.4,1532.0M1016.9,1010.0C1015.2,1018.3 1011.3,1043.4 1006.8,1060.0C1002.4,1076.7 996.8,1093.9 990.2,1110.1C983.5,1126.2 970.7,1149.0 966.8,1156.8M956.8,1176.8C952.9,1185.1 940.7,1211.8 933.5,1226.8C926.2,1241.8 922.4,1252.9 913.5,1266.8C904.6,1280.7 891.2,1296.3 880.1,1310.2C869.0,1324.1 856.8,1336.3 846.8,1350.2C836.7,1364.1 824.5,1386.3 820.1,1393.6M820.1,1393.6C819.5,1396.3 816.2,1405.8 816.7,1410.2C817.3,1414.7 824.0,1415.2 823.4,1420.3C822.9,1425.3 816.2,1432.5 813.4,1440.3C810.6,1448.0 808.4,1456.9 806.7,1466.9C805.1,1477.0 807.3,1489.5 803.4,1500.3C799.5,1511.1 786.7,1526.7 783.4,1532.0M886.8,1128.4C891.8,1130.9 903.7,1137.9 916.8,1143.4C929.9,1149.0 957.1,1158.7 965.2,1161.8M881.8,1141.8C887.1,1145.4 901.0,1157.9 913.5,1163.4C926.0,1169.0 948.2,1175.1 956.8,1175.1C965.4,1175.1 963.8,1165.4 965.2,1163.4M743.4,1460.3C743.9,1462.5 741.1,1469.2 746.7,1473.6C752.3,1478.1 768.4,1486.4 776.7,1487.0C785.1,1487.5 790.6,1484.2 796.7,1477.0C802.8,1469.7 810.6,1449.2 813.4,1443.6M1115.2,1005.0C1115.5,1015.3 1115.5,1048.1 1116.9,1066.7C1118.3,1085.3 1120.8,1102.3 1123.6,1116.7C1126.4,1131.2 1131.9,1147.3 1133.6,1153.4M1136.9,1180.1C1136.9,1192.3 1135.3,1233.5 1136.9,1253.5C1138.6,1273.5 1143.0,1284.1 1146.9,1300.2C1150.8,1316.3 1158.1,1330.8 1160.3,1350.2C1162.5,1369.7 1162.5,1396.3 1160.3,1416.9C1158.1,1437.5 1151.9,1459.7 1146.9,1473.6C1141.9,1487.5 1134.1,1490.6 1130.3,1500.3C1126.4,1510.0 1124.7,1526.7 1123.6,1532.0M1222.0,1006.7C1222.8,1016.7 1227.3,1043.9 1227.0,1066.7C1226.7,1089.5 1221.4,1130.6 1220.3,1143.4M1217.0,1166.8C1218.6,1173.4 1224.8,1192.3 1227.0,1206.8C1229.2,1221.2 1231.4,1237.9 1230.3,1253.5C1229.2,1269.0 1223.6,1284.1 1220.3,1300.2C1217.0,1316.3 1212.5,1333.5 1210.3,1350.2C1208.1,1366.9 1205.3,1386.3 1207.0,1400.2C1208.6,1414.1 1219.2,1419.7 1220.3,1433.6C1221.4,1447.5 1215.9,1467.2 1213.6,1483.6C1211.4,1500.0 1208.1,1523.9 1207.0,1532.0M1130.3,1160.1C1137.5,1161.2 1158.6,1169.0 1173.6,1166.8C1188.6,1164.5 1212.5,1150.1 1220.3,1146.8M1136.9,1180.1C1143.6,1179.3 1163.6,1177.9 1177.0,1175.1C1190.3,1172.3 1210.3,1165.4 1217.0,1163.4M1130.3,1160.1C1130.8,1162.3 1132.5,1170.1 1133.6,1173.4C1134.7,1176.8 1136.4,1179.0 1136.9,1180.1M1220.3,1146.8C1220.0,1148.4 1219.2,1154.0 1218.6,1156.8C1218.1,1159.5 1217.3,1162.3 1217.0,1163.4M1136.9,1500.3C1139.7,1503.6 1147.5,1516.1 1153.6,1520.3C1159.7,1524.5 1166.9,1527.5 1173.6,1525.3C1180.3,1523.1 1187.0,1514.5 1193.6,1507.0C1200.3,1499.5 1210.3,1484.7 1213.6,1480.3M925.4,399.4C929.2,401.6 940.5,409.3 948.1,412.4C955.6,415.5 963.7,417.0 970.7,418.1C977.8,419.2 984.3,420.4 990.2,418.9C996.1,417.4 1001.0,413.8 1006.4,409.2C1011.8,404.6 1019.9,394.3 1022.6,391.3M907.5,396.2C910.0,396.5 917.8,397.0 922.1,397.8C926.5,398.6 931.6,400.5 933.5,401.1M977.2,422.1C974.0,420.8 963.7,414.8 957.8,414.0C951.8,413.2 945.1,414.0 941.6,417.3C938.1,420.5 935.9,428.3 936.7,433.5C937.5,438.6 942.1,445.9 946.4,448.1C950.8,450.2 958.1,448.6 962.6,446.4C967.2,444.3 972.1,437.0 974.0,435.1M975.6,420.5L977.2,435.1M998.3,415.7L1000.7,431.9M977.2,435.1C979.4,435.2 985.9,436.4 990.2,435.9C994.5,435.4 1001.0,432.5 1003.2,431.9M998.3,415.7C1002.3,411.6 1016.9,393.8 1022.6,391.3C1028.3,388.9 1029.9,396.2 1032.3,401.1C1034.8,405.9 1036.7,414.6 1037.2,420.5C1037.7,426.5 1038.5,434.0 1035.6,436.7C1032.6,439.4 1024.8,437.5 1019.4,436.7C1014.0,435.9 1005.9,432.7 1003.2,431.9M974.0,436.7C973.5,443.5 970.5,465.1 970.7,477.2C971.0,489.4 975.1,491.3 975.6,509.6C976.2,528.0 969.7,578.0 974.0,587.4C978.3,596.9 992.6,566.4 1001.5,566.4C1010.5,566.4 1022.1,591.5 1027.5,587.4C1032.9,583.4 1033.7,557.7 1034.0,542.1C1034.2,526.4 1031.5,506.9 1029.1,493.4C1026.7,479.9 1023.7,471.0 1019.4,461.0C1015.0,451.0 1005.9,438.1 1003.2,433.5M1003.2,433.5C1000.2,436.7 989.4,442.9 985.3,452.9C981.3,462.9 980.2,484.0 978.9,493.4C977.5,502.9 980.5,501.0 977.2,509.6C974.0,518.3 964.3,543.7 959.4,545.3C954.5,546.9 955.1,523.1 948.1,519.4C941.0,515.6 917.3,532.9 917.3,522.6C917.3,512.3 938.6,472.1 948.1,457.8C957.5,443.5 969.7,440.2 974.0,436.7M880.0,491.8C885.4,489.4 903.2,480.7 912.4,477.2C921.6,473.7 928.9,474.0 935.1,470.7C941.3,467.5 947.3,459.9 949.7,457.8M889.7,487.0C892.2,489.9 899.7,498.8 904.3,504.8C908.9,510.7 911.9,517.2 917.3,522.6C922.7,528.0 930.5,534.2 936.7,537.2C942.9,540.2 951.6,539.9 954.5,540.4M1035.6,514.5C1039.4,512.6 1051.8,508.3 1058.3,503.2C1064.7,498.0 1070.4,491.3 1074.5,483.7C1078.5,476.2 1079.6,466.7 1082.6,457.8C1085.5,448.9 1088.2,435.4 1092.3,430.2C1096.3,425.1 1102.3,426.2 1106.9,427.0C1111.5,427.8 1117.7,433.7 1119.8,435.1M1038.8,427.8C1042.1,427.7 1049.6,426.9 1058.3,427.0C1066.9,427.1 1085.3,428.3 1090.7,428.6M889.7,509.6C891.3,515.0 897.6,531.2 899.4,542.1C901.3,552.9 899.7,565.8 901.1,574.5C902.4,583.1 904.8,586.3 907.5,593.9C910.2,601.5 914.3,612.3 917.3,619.8C920.2,627.4 924.0,636.0 925.4,639.3M1115.0,569.6C1114.2,573.1 1110.4,584.5 1110.1,590.7C1109.8,596.9 1113.4,602.0 1113.4,606.9C1113.4,611.7 1109.3,616.3 1110.1,619.8C1110.9,623.3 1116.9,626.6 1118.2,627.9M829.1,280.0C827.7,283.9 823.6,294.2 820.8,303.7C818.0,313.2 812.5,329.4 812.5,336.9C812.5,344.4 816.3,344.8 820.8,348.7C825.3,352.7 835.0,356.6 839.8,360.6C844.5,364.5 847.1,368.1 849.2,372.4C851.4,376.7 852.8,381.1 852.8,386.6C852.8,392.1 851.2,399.7 849.2,405.6C847.3,411.5 842.9,416.8 840.9,422.2C839.0,427.5 837.0,432.6 837.4,437.6C837.8,442.5 840.2,448.6 843.3,451.8C846.5,454.9 853.2,454.3 856.3,456.5C859.5,458.7 861.5,462.6 862.3,464.8C863.1,467.1 861.3,469.2 861.1,470.0M831.5,303.7C829.9,308.0 822.0,323.2 822.0,329.8C822.0,336.3 827.3,337.9 831.5,342.8C835.6,347.7 844.3,356.6 846.9,359.4M831.5,303.7C832.1,306.7 833.2,313.6 835.0,321.5C836.8,329.4 840.2,344.8 842.1,351.1C844.1,357.4 846.1,358.0 846.9,359.4M857.5,410.3C855.6,414.3 847.5,428.7 845.7,434.0C843.9,439.3 843.5,439.9 846.9,442.3C850.2,444.7 862.7,447.2 865.8,448.2M857.5,410.3C857.3,413.3 855.0,421.8 856.3,428.1C857.7,434.4 864.2,444.9 865.8,448.2M876.5,280.0C876.3,283.9 874.7,294.8 875.3,303.7C875.9,312.6 878.5,325.4 880.0,333.3C881.6,341.2 884.0,345.2 884.8,351.1C885.6,357.0 884.0,364.3 884.8,368.9C885.6,373.4 886.6,377.3 889.5,378.3C892.5,379.3 899.2,375.8 902.5,374.8C905.9,373.8 906.3,374.0 909.7,372.4C913.0,370.8 920.3,365.3 922.7,365.3C925.1,365.3 924.7,369.4 923.9,372.4C923.1,375.4 918.7,379.7 917.9,383.1C917.2,386.4 917.5,390.4 919.1,392.5C920.7,394.7 924.3,396.7 927.4,396.1C930.6,395.5 934.7,390.0 938.1,389.0C941.4,388.0 947.2,388.6 947.6,390.2C948.0,391.8 944.0,397.1 940.5,398.5C936.9,399.8 931.6,398.1 926.2,398.5C920.9,398.9 911.6,401.6 908.5,400.8C905.3,400.0 906.7,397.1 907.3,393.7C907.9,390.4 912.6,383.9 912.0,380.7C911.4,377.5 905.1,375.8 903.7,374.8M894.3,280.0C894.1,283.9 892.7,295.8 893.1,303.7C893.5,311.6 895.0,320.5 896.6,327.4C898.2,334.3 902.0,340.0 902.5,345.2C903.1,350.3 899.0,354.8 900.2,358.2C901.4,361.5 905.7,363.9 909.7,365.3C913.6,366.7 921.5,366.3 923.9,366.5M894.3,309.6C896.6,308.0 903.1,302.9 908.5,300.1C913.8,297.4 920.3,294.7 926.2,293.0C932.2,291.4 941.0,290.6 944.0,290.1M938.1,405.6C937.9,407.4 938.7,412.5 936.9,416.2C935.1,420.0 929.8,423.5 927.4,428.1C925.1,432.6 922.3,438.9 922.7,443.5C923.1,448.0 927.2,451.8 929.8,455.3C932.4,458.9 936.1,462.4 938.1,464.8C940.1,467.3 941.0,469.2 941.6,470.0M936.9,416.2C937.1,418.8 936.9,426.9 938.1,431.6C939.3,436.4 941.0,441.9 944.0,444.7C947.0,447.4 953.9,447.6 955.9,448.2M1031.5,280.0C1031.9,283.0 1034.2,292.2 1033.8,297.8C1033.4,303.3 1031.3,307.8 1029.1,313.2C1026.9,318.5 1022.4,325.6 1020.8,329.8C1019.2,333.9 1018.8,336.1 1019.6,338.0C1020.4,340.0 1023.2,340.2 1025.5,341.6C1027.9,343.0 1032.6,344.0 1033.8,346.3C1035.0,348.7 1034.8,353.1 1032.6,355.8C1030.5,358.6 1024.0,360.2 1020.8,362.9C1017.6,365.7 1014.7,369.2 1013.7,372.4C1012.7,375.6 1012.9,379.5 1014.9,381.9C1016.9,384.3 1022.4,385.2 1025.5,386.6C1028.7,388.0 1032.5,389.6 1033.8,390.2M1039.8,309.6L1039.8,333.3M1081.2,280.0C1081.0,282.4 1079.4,289.9 1080.0,294.2C1080.6,298.6 1082.0,302.9 1084.8,306.1C1087.5,309.2 1091.7,310.6 1096.6,313.2C1101.6,315.7 1108.5,318.1 1114.4,321.5C1120.3,324.8 1128.0,329.2 1132.2,333.3C1136.3,337.5 1138.9,341.8 1139.3,346.3C1139.7,350.9 1137.3,355.8 1134.5,360.6C1131.8,365.3 1125.4,370.4 1122.7,374.8C1119.9,379.1 1118.3,383.1 1117.9,386.6C1117.5,390.2 1117.9,393.7 1120.3,396.1C1122.7,398.5 1127.2,398.5 1132.2,400.8C1137.1,403.2 1147.4,406.8 1149.9,410.3C1152.5,413.9 1148.9,418.2 1147.6,422.2C1146.2,426.1 1144.2,430.5 1141.6,434.0C1139.1,437.6 1133.7,441.9 1132.2,443.5M1097.8,325.0C1100.6,326.2 1109.7,329.6 1114.4,332.1C1119.1,334.7 1124.1,337.3 1126.2,340.4C1128.4,343.6 1128.8,346.9 1127.4,351.1C1126.0,355.2 1121.3,360.6 1117.9,365.3C1114.6,370.0 1109.1,377.1 1107.3,379.5M1097.8,325.0C1099.2,327.8 1103.9,335.3 1106.1,341.6C1108.3,347.9 1110.6,356.6 1110.8,362.9C1111.0,369.2 1107.9,376.7 1107.3,379.5M1117.9,399.7C1121.7,401.4 1136.5,407.0 1140.5,410.3C1144.4,413.7 1144.0,415.2 1141.6,419.8C1139.3,424.3 1128.8,434.6 1126.2,437.6M1117.9,399.7C1119.3,402.0 1124.5,409.1 1126.2,413.9C1128.0,418.6 1128.6,424.1 1128.6,428.1C1128.6,432.0 1126.6,436.0 1126.2,437.6M1067.0,327.4C1068.2,329.0 1073.1,333.7 1074.1,336.9C1075.1,340.0 1074.7,343.0 1072.9,346.3C1071.1,349.7 1065.8,353.4 1063.4,357.0C1061.1,360.6 1059.3,364.3 1058.7,367.7C1058.1,371.0 1058.5,374.0 1059.9,377.1C1061.3,380.3 1064.2,383.5 1067.0,386.6C1069.8,389.8 1074.3,393.1 1076.5,396.1C1078.7,399.1 1080.6,401.0 1080.0,404.4C1079.4,407.7 1074.1,414.3 1072.9,416.2M1081.2,355.8C1081.4,358.2 1081.0,365.9 1082.4,370.0C1083.8,374.2 1087.3,377.3 1089.5,380.7C1091.7,384.1 1094.8,386.2 1095.4,390.2C1096.0,394.1 1093.3,400.0 1093.1,404.4C1092.9,408.7 1092.7,413.1 1094.3,416.2C1095.8,419.4 1099.8,421.6 1102.5,423.3C1105.3,425.1 1109.5,426.3 1110.8,426.9M825.1,952.9C822.7,956.2 814.6,965.7 810.5,972.4C806.4,979.1 803.6,985.7 800.7,993.2C797.9,1000.7 794.6,1013.5 793.4,1017.6M825.1,952.9C826.3,952.8 829.8,951.8 832.4,952.3C835.1,952.8 836.7,955.8 841.0,956.0C845.2,956.2 850.9,954.6 858.0,953.5C865.2,952.5 876.7,951.2 883.7,949.9C890.6,948.6 894.4,946.2 899.5,945.6C904.6,945.0 908.7,946.4 914.1,946.2C919.6,946.0 926.3,944.9 932.4,944.4C938.5,943.9 944.0,942.9 950.7,943.2C957.4,943.5 965.6,946.4 972.7,946.2C979.8,946.0 984.9,942.5 993.4,942.0C1002.0,941.4 1012.8,942.7 1023.9,943.2C1035.0,943.7 1054.0,944.7 1060.0,945.0M793.4,1017.6C795.2,1017.6 800.9,1016.3 804.4,1017.6C807.8,1018.8 810.1,1022.7 814.1,1024.9C818.2,1027.0 825.7,1028.9 828.8,1030.4C831.8,1031.8 830.4,1033.1 832.4,1033.4C834.5,1033.7 838.3,1032.6 841.0,1032.2C843.6,1031.8 844.6,1030.9 848.3,1031.0C852.0,1031.1 857.0,1033.4 862.9,1032.8C868.8,1032.2 877.2,1028.3 883.7,1027.3C890.2,1026.3 895.2,1027.1 902.0,1026.7C908.7,1026.3 920.2,1027.2 923.9,1024.9C927.6,1022.5 923.5,1015.5 923.9,1012.7C924.3,1009.8 922.9,1008.2 926.3,1007.8C929.8,1007.4 938.5,1009.8 944.6,1010.2C950.7,1010.7 959.7,1010.9 962.9,1010.2C966.2,1009.6 962.1,1007.0 964.1,1006.6C966.2,1006.2 969.2,1007.4 975.1,1007.8C981.0,1008.2 992.4,1009.4 999.5,1009.0C1006.6,1008.6 1013.7,1007.2 1017.8,1005.4C1021.9,1003.5 1020.9,997.6 1023.9,998.0C1027.0,998.5 1032.4,1005.8 1036.1,1007.8C1039.8,1009.8 1041.9,1011.3 1045.9,1010.2C1049.8,1009.2 1057.6,1003.1 1060.0,1001.7M1296.0,927.4C1297.3,929.0 1300.5,931.4 1303.9,936.6C1307.3,941.8 1311.4,950.6 1316.1,958.5C1320.8,966.5 1329.3,979.9 1332.0,984.1M1060.0,945.1C1066.1,943.9 1084.4,940.5 1096.6,937.8C1108.8,935.1 1123.0,930.4 1133.2,928.7C1143.3,926.9 1149.4,927.3 1157.6,927.4C1165.7,927.5 1173.8,928.6 1182.0,929.3C1190.1,930.0 1196.2,931.5 1206.3,931.7C1216.5,931.9 1228.0,931.2 1242.9,930.5C1257.9,929.8 1287.1,927.9 1296.0,927.4M1060.0,1000.0C1064.1,1000.6 1078.3,1004.1 1084.4,1003.7C1090.5,1003.3 1091.5,997.8 1096.6,997.6C1101.7,997.4 1110.4,1001.9 1114.9,1002.4C1119.3,1002.9 1120.2,999.8 1123.4,1000.6C1126.7,1001.4 1130.3,1007.7 1134.4,1007.3C1138.5,1006.9 1142.9,998.8 1147.8,998.2C1152.7,997.6 1159.0,1001.7 1163.7,1003.7C1168.3,1005.6 1169.8,1009.1 1175.9,1009.8C1182.0,1010.4 1194.1,1008.9 1200.2,1007.3C1206.3,1005.7 1209.2,1000.2 1212.4,1000.0C1215.7,999.8 1214.7,1005.1 1219.8,1006.1C1224.8,1007.1 1238.0,1006.7 1242.9,1006.1C1247.8,1005.5 1246.6,1002.2 1249.0,1002.4C1251.5,1002.6 1254.5,1007.3 1257.6,1007.3C1260.6,1007.3 1263.7,1003.5 1267.3,1002.4C1271.0,1001.4 1275.4,1001.2 1279.5,1001.2C1283.6,1001.2 1287.0,1003.9 1291.7,1002.4C1296.4,1001.0 1303.1,994.1 1307.6,992.7C1312.0,991.3 1314.5,995.3 1318.5,993.9C1322.6,992.5 1329.7,985.8 1332.0,984.1"/>
<g transform="translate(2040,913.5) scale(0.09154) translate(-543,-146)" fill="none" stroke="#8a8a8a" stroke-width="9"><use href="#tf"/></g>
<g transform="translate(2040,1045) scale(0.09154) translate(-543,-146)" fill="none" stroke="#8a8a8a" stroke-width="9"><use href="#tf"/></g>
<g transform="translate(2040,1441) scale(0.09154) translate(-543,-146)" fill="none" stroke="#8e8ee8" stroke-width="9"><use href="#tf"/></g>
<!-- folders -->
<g>
<path d="M2022,1214 Q2022,1210 2026,1210 L2050,1210 L2058,1219 L2100,1219 Q2104,1219 2104,1223 L2104,1270 L2022,1270Z" fill="url(#fb)" stroke="#6a6a6a" stroke-width="1"/>
<path d="M2026,1230 L2106,1230 Q2109,1230 2108,1233 L2104,1272 Q2104,1276 2100,1276 L2030,1276 Q2027,1276 2027,1272Z" fill="url(#fg)" stroke="#5a5a5a" stroke-width="1.2"/>
</g>
<g>
<path d="M2022,1346 Q2022,1342 2026,1342 L2050,1342 L2058,1351 L2100,1351 Q2104,1351 2104,1355 L2104,1402 L2022,1402Z" fill="url(#fb)" stroke="#6a6a6a" stroke-width="1"/>
<path d="M2040,1379 L2116,1379 Q2120,1379 2118,1383 L2106,1404 Q2104,1408 2100,1408 L2028,1408 Q2024,1408 2026,1404Z" fill="url(#fg)" stroke="#5a5a5a" stroke-width="1.2"/>
</g>
<rect x="2100" y="1410" width="33" height="31" fill="#1c1c1c"/>
<circle cx="2115.5" cy="1425.5" r="9" fill="none" stroke="#e04545" stroke-width="2.2"/>
<line x1="2109" y1="1432" x2="2122" y2="1419" stroke="#e04545" stroke-width="2.2"/>
<text x="2162.5" y="1121.5" fill="#f2f2f2" font-size="26.5" font-family="Liberation Sans">Line Art</text>
<text x="2143" y="1254" fill="#f2f2f2" font-size="26.5" font-family="Liberation Sans">Color</text>
<text x="2143" y="1386" fill="#f2f2f2" font-size="26.5" font-family="Liberation Sans">Draft</text>
<text x="2162.5" y="1518" fill="#f2f2f2" font-size="26.5" font-family="Liberation Sans">Draft</text>
<use href="#gear" x="2334" y="716"/>
<use href="#gear" x="2334" y="847.5"/>
<use href="#gear" x="2334" y="979.3"/>
<use href="#gear" x="2334" y="1111.6"/>
<use href="#gear" x="2334" y="1244"/>
<use href="#gear" x="2334" y="1375.8"/>
<use href="#gear" x="2334" y="1507.7"/>
</svg>

<div id="btool" class="a"></div>
<svg class="a" style="left:494px;top:1532px" width="1446" height="95" viewBox="494 1532 1446 95">
<defs>
<pattern id="chk2" x="781" y="1556" width="16" height="16" patternUnits="userSpaceOnUse"><rect width="16" height="16" fill="#ffffff"/><rect x="8" width="8" height="8" fill="#dedede"/><rect y="8" width="8" height="8" fill="#dedede"/></pattern>
</defs>
<!-- undo -->
<path d="M560.4,1594 C560.4,1578 550,1572 536,1572 L536,1565.6 L522,1578.5 L536,1591 L536,1584.5 C547,1583.5 556,1586 560.4,1594Z" fill="#e4e4e4"/>
<!-- redo -->
<path d="M609.7,1593 C609.7,1577 620,1572 634,1572 L634,1565.6 L647.8,1578.5 L634,1591 L634,1584.5 C623,1583.5 614,1586 609.7,1593Z" fill="#8e8e8e"/>
<!-- brush swap -->
<line x1="725" y1="1557" x2="707" y2="1575" stroke="#4f97c7" stroke-width="7.5" stroke-linecap="round"/>
<path d="M702,1578 C698.5,1575.5 693,1577 692,1581.5 C691.5,1584.5 692,1585 690,1587 C694,1588 699,1587 701.5,1584.5 C704,1582 704,1580 702,1578Z" fill="#4f97c7"/>
<path d="M727,1571 C733,1573 737,1577 738,1583" fill="none" stroke="#9a9a9a" stroke-width="3"/>
<path d="M734,1582 L741.5,1582 L738.5,1588Z" fill="#9a9a9a"/>
<path d="M717,1601 C711,1600 707,1596 705.5,1591" fill="none" stroke="#9a9a9a" stroke-width="3"/>
<path d="M702,1593 L709.5,1591 L705,1585.5Z" fill="#9a9a9a"/>
<path d="M735,1587.5 L743,1595.5 L730.5,1607 L723,1599.5Z" fill="#a9a9a9"/>
<path d="M726.5,1599.5 L731,1595 L736,1600 L731,1604.5Z" fill="#232323"/>
<!-- checker -->
<rect x="781" y="1556" width="48" height="48" fill="url(#chk2)"/>
<!-- picker -->
<g>
<path d="M900,1571 L881,1590 L877,1595 L882,1591 L901,1572" fill="none" stroke="#e4e4e4" stroke-width="3.5"/>
<path d="M883,1586 L898,1571 L904.5,1577.5 L889.5,1592.5Z M878.5,1590.5 L883,1586 L889.5,1592.5 L885,1597 L876.5,1596Z" fill="none" stroke="#e4e4e4" stroke-width="3.2" stroke-linejoin="round"/>
<line x1="892" y1="1566" x2="909" y2="1583" stroke="#e4e4e4" stroke-width="5"/>
<path d="M899,1563.5 L908.5,1573 L905,1576.5 L895.5,1567Z" fill="#e4e4e4"/>
</g>
<!-- hand -->
<path d="M970.5,1598.8 L990,1598.8 C992,1591 995,1579 997,1572 C998,1567 996,1565 994,1566 C992,1567 991,1571 990,1574 L990,1561 C990,1558 986,1558 986,1561 L985,1573 L984,1558.6 C984,1555.5 980,1555.5 980,1558.6 L979,1573 L977,1561 C977,1558 973,1558 973,1561 L974,1578 C971,1575 967,1573 963,1572.5 C960,1572.5 959.5,1575 961.5,1577 C966,1581 968,1588 970.5,1598.8Z" fill="#e4e4e4"/>
<!-- download -->
<g fill="#c4c4c4">
<rect x="1064" y="1555.7" width="9" height="19"/>
<path d="M1057.5,1573 L1079.5,1573 L1068.5,1586Z"/>
<rect x="1044.5" y="1590.6" width="49" height="13.1"/>
</g>
<rect x="1077.8" y="1595" width="9.8" height="4.4" fill="#232323"/>
<!-- copy -->
<g fill="none" stroke="#f2f2f2" stroke-width="3.5">
<path d="M1147.5,1559.7 H1174 V1586.6"/>
<rect x="1141.2" y="1567.7" width="24.5" height="24.5"/>
</g>
<!-- scissors -->
<g fill="#e4e4e4">
<circle cx="1232" cy="1567.5" r="7.5"/><circle cx="1232" cy="1590.5" r="7.5"/>
<path d="M1237,1571 L1262,1561 C1265,1560 1267,1562 1265,1564 L1245,1579 L1265,1594 C1267,1596 1265,1598.5 1262,1597.5 L1237,1587Z"/>
</g>
<circle cx="1232" cy="1567.5" r="3" fill="#232323"/><circle cx="1232" cy="1590.5" r="3" fill="#232323"/>
<!-- paste -->
<g fill="none" stroke="#e4e4e4" stroke-width="3.2">
<path d="M1315,1598.5 C1312.5,1598.5 1312.5,1597 1312.5,1595 V1560 C1312.5,1557.5 1314,1557 1316,1557 M1345,1557 C1347.5,1557 1349,1557.5 1349,1560 V1565"/>
<rect x="1322.5" y="1571" width="30" height="32.5"/>
</g>
<rect x="1319" y="1553" width="24" height="6" rx="2" fill="#e4e4e4"/>
<g fill="#e4e4e4"><rect x="1327.5" y="1577" width="20" height="3.3"/><rect x="1327.5" y="1583.5" width="15" height="3.3"/><rect x="1327.5" y="1590" width="12" height="3.3"/></g>
<!-- transform -->
<g fill="none" stroke="#e4e4e4" stroke-width="3.2">
<rect x="1398.5" y="1565.5" width="36" height="36"/>
<line x1="1416" y1="1584" x2="1443" y2="1557"/>
<path d="M1431,1557 H1444 V1570"/>
<path d="M1415.5,1570.5 V1585 H1430"/>
</g>
<!-- flip -->
<path d="M1485.7,1569 L1504,1580.2 L1485.7,1591.5Z" fill="#e4e4e4"/>
<line x1="1509" y1="1561.5" x2="1509" y2="1599" stroke="#e4e4e4" stroke-width="2.4" stroke-dasharray="3.2 2.6"/>
<path d="M1533.5,1570.5 L1516.5,1580.2 L1533.5,1590Z" fill="none" stroke="#e4e4e4" stroke-width="2.4"/>
<!-- rotate off -->
<g fill="none" stroke="#e4e4e4" stroke-width="3.5">
<path d="M1591,1564 A19,19 0 0 1 1614,1584"/>
<path d="M1609,1599 A19,19 0 0 1 1575.5,1578" stroke-dasharray="5 3.5"/>
<line x1="1570" y1="1557" x2="1619.5" y2="1605"/>
</g>
<path d="M1587,1565 L1596.5,1556 L1597,1571Z" fill="#e4e4e4"/>
<!-- select eraser -->
<path d="M1676,1566.5 H1662.5 V1600 H1699 V1589" fill="none" stroke="#e4e4e4" stroke-width="3.2"/>
<path d="M1696,1559.5 L1709,1572 L1690.5,1589.5 L1677.5,1577Z" fill="none" stroke="#e4e4e4" stroke-width="3"/>
<path d="M1684,1571 L1697,1583.5 L1690.5,1589.5 L1677.5,1577Z" fill="#e4e4e4"/>
<!-- seps -->
<rect x="1741" y="1540" width="3.5" height="76" fill="#383838"/>
<rect x="1841.5" y="1540" width="3.5" height="76" fill="#383838"/>
<!-- share -->
<rect x="1776" y="1563" width="34" height="34.5" rx="5" fill="#e8e8e8"/>
<path d="M1785,1590 C1784,1580 1790,1574 1798,1574 L1798,1569 L1806,1576 L1798,1583 L1798,1578.5 C1792,1578.5 1787,1583 1785,1590Z" fill="#232323"/>
<!-- dots -->
<g fill="#c8c8c8">
<circle cx="1883" cy="1565" r="2.4"/><circle cx="1893" cy="1565" r="2.4"/><circle cx="1902.7" cy="1565" r="2.4"/>
<circle cx="1883" cy="1575.2" r="2.4"/><circle cx="1893" cy="1575.2" r="2.4"/><circle cx="1902.7" cy="1575.2" r="2.4"/>
<circle cx="1883" cy="1585" r="2.4"/><circle cx="1893" cy="1585" r="2.4"/><circle cx="1902.7" cy="1585" r="2.4"/>
<circle cx="1883" cy="1595" r="2.4"/><circle cx="1893" cy="1595" r="2.4"/><circle cx="1902.7" cy="1595" r="2.4"/>
</g>
</svg>

<div id="home" class="a"></div>
<div id="popup" class="a">
<div class="row" style="top:0">Merge all layers</div>
<div class="rsep" style="top:114px"></div>
<div class="row" style="top:115px">Merge Down</div>
<div class="rsep" style="top:229px"></div>
<div class="row" style="top:230px">Clear</div>
<div class="rsep" style="top:344px"></div>
<div class="row" style="top:345px;color:#8a8a8c">Rasterize</div>
<div class="rsep" style="top:459px"></div>
<div class="row" style="top:460px">Flip</div>
<div class="rsep" style="top:574px"></div>
<div class="row" style="top:575px">Flip Vertical</div>
<div class="rsep" style="top:689px"></div>
<div class="row" style="top:690px">Watercolor edge</div>
<div class="rsep" style="top:804px"></div>
<div class="row" style="top:805px">Filter</div>
</div>
<svg class="a" style="left:2258px;top:515px" width="34" height="92" viewBox="2258 515 34 92">
<path d="M2265.5,520 L2266,520 C2266,530 2268,537 2274,543 L2290,561.5 L2274,580 C2268,586 2266,593 2266,603 L2258,603Z" fill="#d8d8da"/>
</svg>
<svg class="a" style="left:2270px;top:490px" width="118" height="145" viewBox="2270 490 118 145"><!-- red highlight -->
<path d="M2281,495 H2387 V629.5 H2281 Z M2305,519 V605 H2371 V519 Z" fill="#e6434c" fill-rule="evenodd"/>
<rect x="2305" y="519" width="66" height="86" fill="#3b3b3b"/>
<circle cx="2325.7" cy="562.2" r="4.6" fill="#d2d2d2"/><circle cx="2339.5" cy="562.2" r="4.6" fill="#d2d2d2"/><circle cx="2353.2" cy="562.2" r="4.6" fill="#d2d2d2"/>
</svg>
</body></html>
